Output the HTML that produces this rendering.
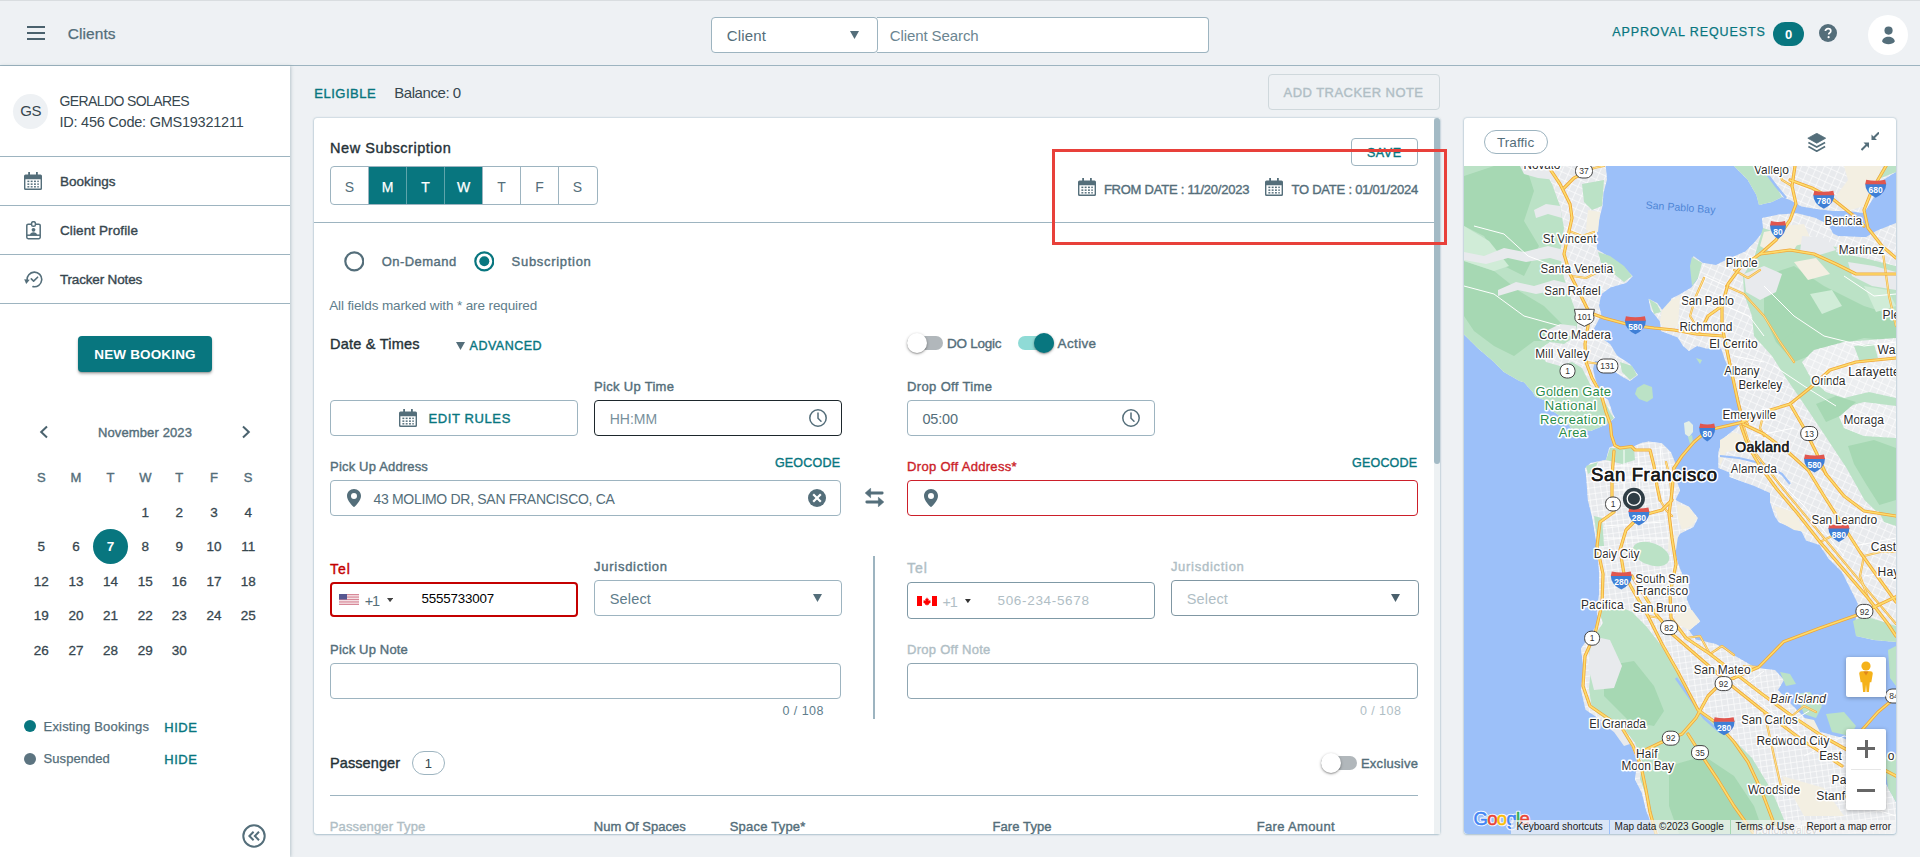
<!DOCTYPE html>
<html><head><meta charset="utf-8"><title>Clients</title>
<style>
html,body{margin:0;padding:0;}
body{width:1920px;height:857px;overflow:hidden;background:#eef1f4;font-family:"Liberation Sans",sans-serif;position:relative;}
.t{position:absolute;white-space:pre;line-height:20px;height:20px;}
.b{position:absolute;display:block;}
</style></head><body>
<div class="b" style="left:0;top:0;width:1920px;height:1px;background:#d9dde0"></div>
<div class="b" style="left:0;top:65px;width:1920px;height:1px;background:#9db4c0"></div>
<div class="b" style="left:27px;top:26px;width:18px;height:2px;background:#4a616d;"></div>
<div class="b" style="left:27px;top:32px;width:18px;height:2px;background:#4a616d;"></div>
<div class="b" style="left:27px;top:38px;width:18px;height:2px;background:#4a616d;"></div>
<div class="t" style="left:67.70px;top:24.00px;font-size:15.5px;font-weight:400;-webkit-text-stroke:0.25px #546e7a;color:#546e7a;letter-spacing:0.08px;">Clients</div>
<div class="b" style="left:711px;top:17px;width:167px;height:36px;border:1px solid #9db4c0;border-radius:4px;background:#fff;box-sizing:border-box;z-index:2;"></div>
<div class="b" style="left:877px;top:17px;width:332px;height:36px;border:1px solid #9db4c0;border-left:none;border-radius:0 4px 4px 0;background:#fff;box-sizing:border-box;"></div>
<div class="t" style="left:726.70px;top:26.00px;font-size:15px;font-weight:400;color:#546e7a;letter-spacing:0.17px;z-index:3;">Client</div>
<svg class="b" style="z-index:3;left:849.5px;top:31.3px;" width="9" height="8" viewBox="0 0 9 8"><path d="M0 0h9l-4.5 8z" fill="#546e7a"/></svg>
<div class="t" style="left:889.70px;top:26.00px;font-size:15px;font-weight:400;color:#6b8591;letter-spacing:-0.09px;">Client Search</div>
<div class="t" style="left:1612.20px;top:22.00px;font-size:12.5px;font-weight:400;-webkit-text-stroke:0.25px #08767f;color:#08767f;letter-spacing:0.9px;">APPROVAL REQUESTS</div>
<div class="b" style="left:1773px;top:22px;width:31px;height:24px;border-radius:12px;background:#08767f;"></div>
<div class="t" style="left:1773.10px;width:31px;text-align:center;top:25.00px;font-size:13px;font-weight:700;color:#fff;">0</div>
<svg class="b" style="left:1819px;top:24px;" width="18" height="18" viewBox="0 0 18 18"><circle cx="9" cy="9" r="9" fill="#546e7a"/><path d="M6.4 7.1c0-1.5 1.2-2.5 2.7-2.5 1.6 0 2.7 1 2.7 2.3 0 1.1-.6 1.6-1.3 2.1-.6.4-.8.7-.8 1.4" fill="none" stroke="#fff" stroke-width="1.7"/><circle cx="9.6" cy="13.2" r="1.1" fill="#fff"/></svg>
<div class="b" style="left:1868px;top:15px;width:40px;height:40px;border-radius:50%;background:#fff;"></div>
<svg class="b" style="left:1881.5px;top:25.5px;" width="13" height="19" viewBox="0 0 13 19"><circle cx="6.55" cy="4.600" r="4.100" fill="#546e7a"/><path d="M0.100 15.600C0.300 12.400 3.200 10.750 6.450 10.750S12.600 12.400 12.800 15.600C11.600 17.500 9 18.300 6.450 18.300S1.300 17.500 0.100 15.600z" fill="#546e7a"/></svg>
<div class="b" style="left:0px;top:66px;width:290px;height:791px;background:#fff;box-shadow:1px 0 3px rgba(120,144,156,.45);"></div>
<div class="b" style="left:13px;top:93.5px;width:35px;height:35px;border-radius:50%;background:#eef1f4;"></div>
<div class="t" style="left:13.10px;width:35px;text-align:center;top:101.00px;font-size:15px;font-weight:400;color:#37474f;letter-spacing:-0.6px;">GS</div>
<div class="t" style="left:59.50px;top:91.00px;font-size:14px;font-weight:400;color:#37474f;letter-spacing:-0.6px;">GERALDO SOLARES</div>
<div class="t" style="left:59.50px;top:112.00px;font-size:14.5px;font-weight:400;color:#37474f;letter-spacing:-0.24px;">ID: 456 Code: GMS19321211</div>
<div class="b" style="left:0px;top:156px;width:290px;height:1px;background:#9db4c0;"></div>
<div class="b" style="left:0px;top:205px;width:290px;height:1px;background:#9db4c0;"></div>
<div class="b" style="left:0px;top:254px;width:290px;height:1px;background:#9db4c0;"></div>
<div class="b" style="left:0px;top:303px;width:290px;height:1px;background:#9db4c0;"></div>
<svg class="b" style="left:24px;top:172px;" width="18" height="18" viewBox="0 0 18 18"><g fill="#546e7a"><rect x="4.2" y="0" width="1.8" height="4"/><rect x="12" y="0" width="1.8" height="4"/>
<path d="M1.5 2.6h15a1.5 1.5 0 0 1 1.5 1.5v12.4a1.5 1.5 0 0 1-1.5 1.5h-15a1.5 1.5 0 0 1-1.5-1.5V4.1a1.5 1.5 0 0 1 1.5-1.5zM1.4 7.2v8.9a.5.5 0 0 0 .5.5h14.2a.5.5 0 0 0 .5-.5V7.2z" fill-rule="evenodd"/>
<rect x="3.4" y="8.6" width="1.9" height="1.5"/><rect x="6.7" y="8.6" width="1.9" height="1.5"/><rect x="10" y="8.6" width="1.9" height="1.5"/><rect x="13.3" y="8.6" width="1.5" height="1.5"/>
<rect x="3.4" y="11.4" width="1.9" height="1.5"/><rect x="6.7" y="11.4" width="1.9" height="1.5"/><rect x="10" y="11.4" width="1.9" height="1.5"/><rect x="13.3" y="11.4" width="1.5" height="1.5"/>
<rect x="3.4" y="14.1" width="1.9" height="1.4"/><rect x="6.7" y="14.1" width="1.9" height="1.4"/><rect x="10" y="14.1" width="1.9" height="1.4"/><rect x="13.3" y="14.1" width="1.5" height="1.4"/></g></svg>
<div class="t" style="left:59.90px;top:172.00px;font-size:13.5px;font-weight:400;-webkit-text-stroke:0.38px #37474f;color:#37474f;letter-spacing:0.02px;">Bookings</div>
<svg class="b" style="left:26px;top:221px;" width="15" height="18.5" viewBox="0 0 15 18.5"><g fill="none" stroke="#546e7a" stroke-width="1.5"><path d="M5 3.2H2.2a1.4 1.4 0 0 0-1.4 1.4v11.7a1.4 1.4 0 0 0 1.4 1.4h10.6a1.4 1.4 0 0 0 1.4-1.4V4.6a1.4 1.4 0 0 0-1.4-1.4H10"/><rect x="5.6" y="0.7" width="3.8" height="4.6" rx="1.6"/><path d="M1 14.2h13"/></g><circle cx="7.5" cy="8.8" r="1.9" fill="#546e7a"/><path d="M3.9 14c.3-1.9 1.7-2.7 3.6-2.7s3.3.8 3.6 2.7z" fill="#546e7a"/></svg>
<div class="t" style="left:59.90px;top:221.00px;font-size:13.5px;font-weight:400;-webkit-text-stroke:0.38px #37474f;color:#37474f;letter-spacing:0.12px;">Client Profile</div>
<svg class="b" style="left:24px;top:270px;" width="18.5" height="18" viewBox="0 0 18.5 18"><g fill="none" stroke="#546e7a" stroke-width="1.6" stroke-linecap="round" stroke-linejoin="round"><path d="M3.2 10.5A7.3 7.3 0 1 1 9 16.6"/><path d="M7.3 8.9l2.3 2.2 4-3.9"/></g><path d="M0.2 9.2l5.6.6-3.6 4.3z" fill="#546e7a"/></svg>
<div class="t" style="left:59.90px;top:270.00px;font-size:13.5px;font-weight:400;-webkit-text-stroke:0.38px #37474f;color:#37474f;letter-spacing:-0.16px;">Tracker Notes</div>
<div class="b" style="left:78px;top:336px;width:134px;height:36px;border-radius:4px;background:#08767f;box-shadow:0 2px 3px rgba(0,0,0,.28),0 1px 1px rgba(0,0,0,.14);"></div>
<div class="t" style="left:78.00px;width:134px;text-align:center;top:345.00px;font-size:13.5px;font-weight:700;color:#fff;letter-spacing:0.15px;">NEW BOOKING</div>
<svg class="b" style="left:39px;top:425px;" width="10" height="14" viewBox="0 0 10 14"><path d="M8 1.5L2.2 7 8 12.5" fill="none" stroke="#4a626e" stroke-width="2"/></svg>
<svg class="b" style="left:241px;top:425px;" width="10" height="14" viewBox="0 0 10 14"><path d="M2 1.5L7.8 7 2 12.5" fill="none" stroke="#4a626e" stroke-width="2"/></svg>
<div class="t" style="left:97.90px;top:423.00px;font-size:13px;font-weight:400;-webkit-text-stroke:0.38px #546e7a;color:#546e7a;letter-spacing:0.13px;">November 2023</div>
<div class="t" style="left:26.30px;width:30px;text-align:center;top:468.00px;font-size:13px;font-weight:400;-webkit-text-stroke:0.38px #546e7a;color:#546e7a;">S</div>
<div class="t" style="left:61.00px;width:30px;text-align:center;top:468.00px;font-size:13px;font-weight:400;-webkit-text-stroke:0.38px #546e7a;color:#546e7a;">M</div>
<div class="t" style="left:95.40px;width:30px;text-align:center;top:468.00px;font-size:13px;font-weight:400;-webkit-text-stroke:0.38px #546e7a;color:#546e7a;">T</div>
<div class="t" style="left:130.30px;width:30px;text-align:center;top:468.00px;font-size:13px;font-weight:400;-webkit-text-stroke:0.38px #546e7a;color:#546e7a;">W</div>
<div class="t" style="left:164.20px;width:30px;text-align:center;top:468.00px;font-size:13px;font-weight:400;-webkit-text-stroke:0.38px #546e7a;color:#546e7a;">T</div>
<div class="t" style="left:199.00px;width:30px;text-align:center;top:468.00px;font-size:13px;font-weight:400;-webkit-text-stroke:0.38px #546e7a;color:#546e7a;">F</div>
<div class="t" style="left:233.20px;width:30px;text-align:center;top:468.00px;font-size:13px;font-weight:400;-webkit-text-stroke:0.38px #546e7a;color:#546e7a;">S</div>
<div class="b" style="left:93px;top:529.3px;width:35px;height:35px;border-radius:50%;background:#08767f;"></div>
<div class="t" style="left:130.30px;width:30px;text-align:center;top:503.00px;font-size:13.5px;font-weight:400;color:#37474f;-webkit-text-stroke:0.3px #37474f;">1</div>
<div class="t" style="left:164.20px;width:30px;text-align:center;top:503.00px;font-size:13.5px;font-weight:400;color:#37474f;-webkit-text-stroke:0.3px #37474f;">2</div>
<div class="t" style="left:199.00px;width:30px;text-align:center;top:503.00px;font-size:13.5px;font-weight:400;color:#37474f;-webkit-text-stroke:0.3px #37474f;">3</div>
<div class="t" style="left:233.20px;width:30px;text-align:center;top:503.00px;font-size:13.5px;font-weight:400;color:#37474f;-webkit-text-stroke:0.3px #37474f;">4</div>
<div class="t" style="left:26.30px;width:30px;text-align:center;top:537.00px;font-size:13.5px;font-weight:400;color:#37474f;-webkit-text-stroke:0.3px #37474f;">5</div>
<div class="t" style="left:61.00px;width:30px;text-align:center;top:537.00px;font-size:13.5px;font-weight:400;color:#37474f;-webkit-text-stroke:0.3px #37474f;">6</div>
<div class="t" style="left:95.40px;width:30px;text-align:center;top:537.00px;font-size:13.5px;font-weight:700;color:#fff;">7</div>
<div class="t" style="left:130.30px;width:30px;text-align:center;top:537.00px;font-size:13.5px;font-weight:400;color:#37474f;-webkit-text-stroke:0.3px #37474f;">8</div>
<div class="t" style="left:164.20px;width:30px;text-align:center;top:537.00px;font-size:13.5px;font-weight:400;color:#37474f;-webkit-text-stroke:0.3px #37474f;">9</div>
<div class="t" style="left:199.00px;width:30px;text-align:center;top:537.00px;font-size:13.5px;font-weight:400;color:#37474f;-webkit-text-stroke:0.3px #37474f;">10</div>
<div class="t" style="left:233.20px;width:30px;text-align:center;top:537.00px;font-size:13.5px;font-weight:400;color:#37474f;-webkit-text-stroke:0.3px #37474f;">11</div>
<div class="t" style="left:26.30px;width:30px;text-align:center;top:572.00px;font-size:13.5px;font-weight:400;color:#37474f;-webkit-text-stroke:0.3px #37474f;">12</div>
<div class="t" style="left:61.00px;width:30px;text-align:center;top:572.00px;font-size:13.5px;font-weight:400;color:#37474f;-webkit-text-stroke:0.3px #37474f;">13</div>
<div class="t" style="left:95.40px;width:30px;text-align:center;top:572.00px;font-size:13.5px;font-weight:400;color:#37474f;-webkit-text-stroke:0.3px #37474f;">14</div>
<div class="t" style="left:130.30px;width:30px;text-align:center;top:572.00px;font-size:13.5px;font-weight:400;color:#37474f;-webkit-text-stroke:0.3px #37474f;">15</div>
<div class="t" style="left:164.20px;width:30px;text-align:center;top:572.00px;font-size:13.5px;font-weight:400;color:#37474f;-webkit-text-stroke:0.3px #37474f;">16</div>
<div class="t" style="left:199.00px;width:30px;text-align:center;top:572.00px;font-size:13.5px;font-weight:400;color:#37474f;-webkit-text-stroke:0.3px #37474f;">17</div>
<div class="t" style="left:233.20px;width:30px;text-align:center;top:572.00px;font-size:13.5px;font-weight:400;color:#37474f;-webkit-text-stroke:0.3px #37474f;">18</div>
<div class="t" style="left:26.30px;width:30px;text-align:center;top:606.00px;font-size:13.5px;font-weight:400;color:#37474f;-webkit-text-stroke:0.3px #37474f;">19</div>
<div class="t" style="left:61.00px;width:30px;text-align:center;top:606.00px;font-size:13.5px;font-weight:400;color:#37474f;-webkit-text-stroke:0.3px #37474f;">20</div>
<div class="t" style="left:95.40px;width:30px;text-align:center;top:606.00px;font-size:13.5px;font-weight:400;color:#37474f;-webkit-text-stroke:0.3px #37474f;">21</div>
<div class="t" style="left:130.30px;width:30px;text-align:center;top:606.00px;font-size:13.5px;font-weight:400;color:#37474f;-webkit-text-stroke:0.3px #37474f;">22</div>
<div class="t" style="left:164.20px;width:30px;text-align:center;top:606.00px;font-size:13.5px;font-weight:400;color:#37474f;-webkit-text-stroke:0.3px #37474f;">23</div>
<div class="t" style="left:199.00px;width:30px;text-align:center;top:606.00px;font-size:13.5px;font-weight:400;color:#37474f;-webkit-text-stroke:0.3px #37474f;">24</div>
<div class="t" style="left:233.20px;width:30px;text-align:center;top:606.00px;font-size:13.5px;font-weight:400;color:#37474f;-webkit-text-stroke:0.3px #37474f;">25</div>
<div class="t" style="left:26.30px;width:30px;text-align:center;top:641.00px;font-size:13.5px;font-weight:400;color:#37474f;-webkit-text-stroke:0.3px #37474f;">26</div>
<div class="t" style="left:61.00px;width:30px;text-align:center;top:641.00px;font-size:13.5px;font-weight:400;color:#37474f;-webkit-text-stroke:0.3px #37474f;">27</div>
<div class="t" style="left:95.40px;width:30px;text-align:center;top:641.00px;font-size:13.5px;font-weight:400;color:#37474f;-webkit-text-stroke:0.3px #37474f;">28</div>
<div class="t" style="left:130.30px;width:30px;text-align:center;top:641.00px;font-size:13.5px;font-weight:400;color:#37474f;-webkit-text-stroke:0.3px #37474f;">29</div>
<div class="t" style="left:164.20px;width:30px;text-align:center;top:641.00px;font-size:13.5px;font-weight:400;color:#37474f;-webkit-text-stroke:0.3px #37474f;">30</div>
<div class="b" style="left:24px;top:720px;width:12px;height:12px;border-radius:50%;background:#08767f;"></div>
<div class="b" style="left:24px;top:752.8px;width:12px;height:12px;border-radius:50%;background:#5c7480;"></div>
<div class="t" style="left:43.60px;top:717.00px;font-size:13px;font-weight:400;color:#546e7a;letter-spacing:0.17px;-webkit-text-stroke:0.25px #546e7a;">Existing Bookings</div>
<div class="t" style="left:43.60px;top:749.00px;font-size:13px;font-weight:400;color:#546e7a;letter-spacing:0.06px;-webkit-text-stroke:0.25px #546e7a;">Suspended</div>
<div class="t" style="left:164.30px;top:718.00px;font-size:13px;font-weight:400;-webkit-text-stroke:0.38px #08767f;color:#08767f;letter-spacing:0.48px;">HIDE</div>
<div class="t" style="left:164.30px;top:750.00px;font-size:13px;font-weight:400;-webkit-text-stroke:0.38px #08767f;color:#08767f;letter-spacing:0.48px;">HIDE</div>
<svg class="b" style="left:242px;top:824px;" width="24" height="24" viewBox="0 0 24 24"><circle cx="12" cy="12" r="10.7" fill="none" stroke="#546e7a" stroke-width="2"/><path d="M11.6 7.8L7.4 12l4.2 4.2M17 7.8L12.8 12l4.2 4.2" fill="none" stroke="#546e7a" stroke-width="2"/></svg>
<div class="t" style="left:314.30px;top:84.00px;font-size:13px;font-weight:400;-webkit-text-stroke:0.38px #08767f;color:#08767f;letter-spacing:0.5px;">ELIGIBLE</div>
<div class="t" style="left:394.20px;top:83.00px;font-size:15px;font-weight:400;color:#37474f;letter-spacing:-0.43px;">Balance: 0</div>
<div class="b" style="left:1268px;top:74px;width:172px;height:36px;border:1px solid #cfd8dc;border-radius:4px;box-sizing:border-box;"></div>
<div class="t" style="left:1283.60px;top:83.00px;font-size:13px;font-weight:400;-webkit-text-stroke:0.38px #b0bec5;color:#b0bec5;letter-spacing:0.45px;">ADD TRACKER NOTE</div>
<div class="b" style="left:314px;top:118px;width:1126px;height:716px;background:#fff;border-radius:3px;box-shadow:0 0 2px rgba(110,150,170,.7),0 1px 2px rgba(110,150,170,.35);"></div>
<div class="b" style="left:1434px;top:118px;width:6px;height:716px;background:#edf1f3;"></div>
<div class="b" style="left:1434px;top:118px;width:6px;height:346px;background:#a3bac5;border-radius:3px;"></div>
<div class="t" style="left:330.10px;top:138.00px;font-size:14.5px;font-weight:400;-webkit-text-stroke:0.38px #263238;color:#263238;letter-spacing:0.52px;">New Subscription</div>
<div class="b" style="left:330px;top:166px;width:268px;height:39px;border:1px solid #9db4c0;border-radius:4px;box-sizing:border-box;background:#fff;"></div>
<div class="b" style="left:368.5px;top:167px;width:114px;height:37px;background:#08767f;"></div>
<div class="b" style="left:368px;top:167px;width:1px;height:37px;background:#9db4c0;"></div>
<div class="b" style="left:406px;top:167px;width:1px;height:37px;background:rgba(255,255,255,.35);"></div>
<div class="b" style="left:444px;top:167px;width:1px;height:37px;background:rgba(255,255,255,.35);"></div>
<div class="b" style="left:482px;top:167px;width:1px;height:37px;background:#9db4c0;"></div>
<div class="b" style="left:520px;top:167px;width:1px;height:37px;background:#9db4c0;"></div>
<div class="b" style="left:558px;top:167px;width:1px;height:37px;background:#9db4c0;"></div>
<div class="t" style="left:331.50px;width:36px;text-align:center;top:177.00px;font-size:14px;font-weight:400;color:#546e7a;">S</div>
<div class="t" style="left:369.50px;width:36px;text-align:center;top:177.00px;font-size:14px;font-weight:400;-webkit-text-stroke:0.25px #fff;color:#fff;">M</div>
<div class="t" style="left:407.50px;width:36px;text-align:center;top:177.00px;font-size:14px;font-weight:400;-webkit-text-stroke:0.25px #fff;color:#fff;">T</div>
<div class="t" style="left:445.50px;width:36px;text-align:center;top:177.00px;font-size:14px;font-weight:400;-webkit-text-stroke:0.25px #fff;color:#fff;">W</div>
<div class="t" style="left:483.50px;width:36px;text-align:center;top:177.00px;font-size:14px;font-weight:400;color:#546e7a;">T</div>
<div class="t" style="left:521.50px;width:36px;text-align:center;top:177.00px;font-size:14px;font-weight:400;color:#546e7a;">F</div>
<div class="t" style="left:559.50px;width:36px;text-align:center;top:177.00px;font-size:14px;font-weight:400;color:#546e7a;">S</div>
<div class="b" style="left:1351px;top:138px;width:67px;height:28px;border:1px solid #9db4c0;border-radius:4px;box-sizing:border-box;"></div>
<div class="t" style="left:1367.00px;top:143.00px;font-size:12.5px;font-weight:400;-webkit-text-stroke:0.38px #08767f;color:#08767f;letter-spacing:0.53px;">SAVE</div>
<svg class="b" style="left:1078px;top:178px;" width="18" height="18" viewBox="0 0 18 18"><g fill="#546e7a"><rect x="4.2" y="0" width="1.8" height="4"/><rect x="12" y="0" width="1.8" height="4"/>
<path d="M1.5 2.6h15a1.5 1.5 0 0 1 1.5 1.5v12.4a1.5 1.5 0 0 1-1.5 1.5h-15a1.5 1.5 0 0 1-1.5-1.5V4.1a1.5 1.5 0 0 1 1.5-1.5zM1.4 7.2v8.9a.5.5 0 0 0 .5.5h14.2a.5.5 0 0 0 .5-.5V7.2z" fill-rule="evenodd"/>
<rect x="3.4" y="8.6" width="1.9" height="1.5"/><rect x="6.7" y="8.6" width="1.9" height="1.5"/><rect x="10" y="8.6" width="1.9" height="1.5"/><rect x="13.3" y="8.6" width="1.5" height="1.5"/>
<rect x="3.4" y="11.4" width="1.9" height="1.5"/><rect x="6.7" y="11.4" width="1.9" height="1.5"/><rect x="10" y="11.4" width="1.9" height="1.5"/><rect x="13.3" y="11.4" width="1.5" height="1.5"/>
<rect x="3.4" y="14.1" width="1.9" height="1.4"/><rect x="6.7" y="14.1" width="1.9" height="1.4"/><rect x="10" y="14.1" width="1.9" height="1.4"/><rect x="13.3" y="14.1" width="1.5" height="1.4"/></g></svg>
<div class="t" style="left:1103.90px;top:180.00px;font-size:13px;font-weight:400;-webkit-text-stroke:0.38px #546e7a;color:#546e7a;letter-spacing:-0.24px;">FROM DATE : 11/20/2023</div>
<svg class="b" style="left:1265px;top:178px;" width="18" height="18" viewBox="0 0 18 18"><g fill="#546e7a"><rect x="4.2" y="0" width="1.8" height="4"/><rect x="12" y="0" width="1.8" height="4"/>
<path d="M1.5 2.6h15a1.5 1.5 0 0 1 1.5 1.5v12.4a1.5 1.5 0 0 1-1.5 1.5h-15a1.5 1.5 0 0 1-1.5-1.5V4.1a1.5 1.5 0 0 1 1.5-1.5zM1.4 7.2v8.9a.5.5 0 0 0 .5.5h14.2a.5.5 0 0 0 .5-.5V7.2z" fill-rule="evenodd"/>
<rect x="3.4" y="8.6" width="1.9" height="1.5"/><rect x="6.7" y="8.6" width="1.9" height="1.5"/><rect x="10" y="8.6" width="1.9" height="1.5"/><rect x="13.3" y="8.6" width="1.5" height="1.5"/>
<rect x="3.4" y="11.4" width="1.9" height="1.5"/><rect x="6.7" y="11.4" width="1.9" height="1.5"/><rect x="10" y="11.4" width="1.9" height="1.5"/><rect x="13.3" y="11.4" width="1.5" height="1.5"/>
<rect x="3.4" y="14.1" width="1.9" height="1.4"/><rect x="6.7" y="14.1" width="1.9" height="1.4"/><rect x="10" y="14.1" width="1.9" height="1.4"/><rect x="13.3" y="14.1" width="1.5" height="1.4"/></g></svg>
<div class="t" style="left:1291.40px;top:180.00px;font-size:13px;font-weight:400;-webkit-text-stroke:0.38px #546e7a;color:#546e7a;letter-spacing:-0.22px;">TO DATE : 01/01/2024</div>
<div class="b" style="left:314px;top:222px;width:1120px;height:1px;background:#9db4c0;"></div>
<div class="b" style="left:1052px;top:149px;width:395px;height:96px;border:3px solid #e8403a;box-sizing:border-box;z-index:20;"></div>
<svg class="b" style="left:343.5px;top:251px;" width="20.6" height="20.6" viewBox="0 0 20.6 20.6"><circle cx="10.3" cy="10.3" r="9" fill="#fff" stroke="#546e7a" stroke-width="2.200"/></svg>
<svg class="b" style="left:473.5px;top:251px;" width="20.6" height="20.6" viewBox="0 0 20.6 20.6"><circle cx="10.3" cy="10.3" r="9" fill="#fff" stroke="#08767f" stroke-width="2.200"/><circle cx="10.3" cy="10.3" r="5" fill="#08767f"/></svg>
<div class="t" style="left:381.80px;top:252.00px;font-size:13px;font-weight:400;-webkit-text-stroke:0.38px #546e7a;color:#546e7a;letter-spacing:0.44px;">On-Demand</div>
<div class="t" style="left:511.60px;top:252.00px;font-size:13px;font-weight:400;-webkit-text-stroke:0.38px #546e7a;color:#546e7a;letter-spacing:0.7px;">Subscription</div>
<div class="t" style="left:329.20px;top:296.00px;font-size:13.5px;font-weight:400;color:#607d8b;letter-spacing:-0.12px;">All fields marked with * are required</div>
<div class="t" style="left:330.10px;top:334.00px;font-size:14.5px;font-weight:400;-webkit-text-stroke:0.38px #263238;color:#263238;letter-spacing:0.22px;">Date &amp; Times</div>
<svg class="b" style="left:456.3px;top:342px;" width="9" height="8" viewBox="0 0 9 8"><path d="M0 0h9l-4.5 8z" fill="#546e7a"/></svg>
<div class="t" style="left:469.60px;top:336.00px;font-size:12.5px;font-weight:400;-webkit-text-stroke:0.38px #08767f;color:#08767f;letter-spacing:0.5px;">ADVANCED</div>
<div class="b" style="left:906.7px;top:336px;width:36px;height:14px;border-radius:7px;background:#b1b7bb;"></div>
<div class="b" style="left:906.7px;top:333px;width:20px;height:20px;border-radius:50%;background:#fff;box-shadow:0 1px 3px rgba(0,0,0,.35),0 1px 1px rgba(0,0,0,.15);"></div>
<div class="t" style="left:947.10px;top:334.00px;font-size:13.5px;font-weight:400;-webkit-text-stroke:0.38px #546e7a;color:#546e7a;letter-spacing:-0.25px;">DO Logic</div>
<div class="b" style="left:1017.7px;top:336px;width:36px;height:14px;border-radius:7px;background:#8fdbd6;"></div>
<div class="b" style="left:1033.7px;top:333px;width:20px;height:20px;border-radius:50%;background:#08767f;box-shadow:0 1px 3px rgba(0,0,0,.35),0 1px 1px rgba(0,0,0,.15);"></div>
<div class="t" style="left:1057.60px;top:334.00px;font-size:13.5px;font-weight:400;-webkit-text-stroke:0.38px #546e7a;color:#546e7a;letter-spacing:0.35px;">Active</div>
<div class="b" style="left:330px;top:400px;width:248px;height:36px;border:1px solid #9db4c0;border-radius:4px;box-sizing:border-box;"></div>
<svg class="b" style="left:399px;top:409px;" width="18" height="18" viewBox="0 0 18 18"><g fill="#546e7a"><rect x="4.2" y="0" width="1.8" height="4"/><rect x="12" y="0" width="1.8" height="4"/>
<path d="M1.5 2.6h15a1.5 1.5 0 0 1 1.5 1.5v12.4a1.5 1.5 0 0 1-1.5 1.5h-15a1.5 1.5 0 0 1-1.5-1.5V4.1a1.5 1.5 0 0 1 1.5-1.5zM1.4 7.2v8.9a.5.5 0 0 0 .5.5h14.2a.5.5 0 0 0 .5-.5V7.2z" fill-rule="evenodd"/>
<rect x="3.4" y="8.6" width="1.9" height="1.5"/><rect x="6.7" y="8.6" width="1.9" height="1.5"/><rect x="10" y="8.6" width="1.9" height="1.5"/><rect x="13.3" y="8.6" width="1.5" height="1.5"/>
<rect x="3.4" y="11.4" width="1.9" height="1.5"/><rect x="6.7" y="11.4" width="1.9" height="1.5"/><rect x="10" y="11.4" width="1.9" height="1.5"/><rect x="13.3" y="11.4" width="1.5" height="1.5"/>
<rect x="3.4" y="14.1" width="1.9" height="1.4"/><rect x="6.7" y="14.1" width="1.9" height="1.4"/><rect x="10" y="14.1" width="1.9" height="1.4"/><rect x="13.3" y="14.1" width="1.5" height="1.4"/></g></svg>
<div class="t" style="left:428.40px;top:409.00px;font-size:13px;font-weight:400;-webkit-text-stroke:0.38px #08767f;color:#08767f;letter-spacing:0.62px;">EDIT RULES</div>
<div class="t" style="left:594.10px;top:377.00px;font-size:13px;font-weight:400;-webkit-text-stroke:0.38px #546e7a;color:#546e7a;letter-spacing:0.3px;">Pick Up Time</div>
<div class="b" style="left:594px;top:400px;width:248px;height:36px;border:1.5px solid #1d272c;border-radius:4px;box-sizing:border-box;"></div>
<div class="t" style="left:609.70px;top:409.00px;font-size:14px;font-weight:400;color:#78909c;">HH:MM</div>
<svg class="b" style="left:807.7px;top:408px;" width="20" height="20" viewBox="0 0 20 20"><circle cx="10" cy="10" r="8.2" fill="none" stroke="#546e7a" stroke-width="1.5"/><path d="M10 5v5.2l3 3" fill="none" stroke="#546e7a" stroke-width="1.5" stroke-linecap="round"/></svg>
<div class="t" style="left:907.10px;top:377.00px;font-size:13px;font-weight:400;-webkit-text-stroke:0.38px #546e7a;color:#546e7a;letter-spacing:0.35px;">Drop Off Time</div>
<div class="b" style="left:907px;top:400px;width:248px;height:36px;border:1px solid #9db4c0;border-radius:4px;box-sizing:border-box;"></div>
<div class="t" style="left:922.50px;top:409.00px;font-size:14.5px;font-weight:400;color:#546e7a;letter-spacing:-0.2px;">05:00</div>
<svg class="b" style="left:1120.6px;top:408px;" width="20" height="20" viewBox="0 0 20 20"><circle cx="10" cy="10" r="8.2" fill="none" stroke="#546e7a" stroke-width="1.5"/><path d="M10 5v5.2l3 3" fill="none" stroke="#546e7a" stroke-width="1.5" stroke-linecap="round"/></svg>
<div class="t" style="left:330.10px;top:457.00px;font-size:13px;font-weight:400;-webkit-text-stroke:0.38px #546e7a;color:#546e7a;letter-spacing:0.17px;">Pick Up Address</div>
<div class="t" style="left:774.90px;top:453.00px;font-size:12.5px;font-weight:400;-webkit-text-stroke:0.38px #08767f;color:#08767f;letter-spacing:0.2px;">GEOCODE</div>
<div class="b" style="left:330px;top:480px;width:511px;height:36px;border:1px solid #9db4c0;border-radius:4px;box-sizing:border-box;"></div>
<svg class="b" style="left:346.7px;top:489px;" width="14" height="18" viewBox="0 0 14 18"><path d="M7 0C3.1 0 0 3.1 0 7c0 4.6 5.6 10 6.5 10.8a.7.7 0 0 0 1 0C8.4 17 14 11.6 14 7c0-3.9-3.1-7-7-7zm0 9.9A3 3 0 1 1 7 3.9a3 3 0 0 1 0 6z" fill="#546e7a"/></svg>
<div class="t" style="left:373.40px;top:489.00px;font-size:14px;font-weight:400;color:#546e7a;letter-spacing:-0.3px;">43 MOLIMO DR, SAN FRANCISCO, CA</div>
<svg class="b" style="left:808px;top:489px;" width="18" height="18" viewBox="0 0 18 18"><circle cx="9" cy="9" r="9" fill="#546e7a"/><path d="M5.2 5.2l7.600 7.600M12.800 5.200l-7.600 7.600" stroke="#fff" stroke-width="2.200" fill="none"/></svg>
<svg class="b" style="left:864.5px;top:487.5px;" width="19" height="19" viewBox="0 0 19 19"><g fill="none" stroke="#546e7a" stroke-width="2.8" stroke-linecap="round"><path d="M5 5h12.2M1.800 14h11.7"/></g><path d="M0.200 5l5.400-4.700v9.400zM18.800 14l-5.400-4.700v9.400z" fill="#546e7a" stroke="#546e7a" stroke-width="0.600" stroke-linejoin="round"/></svg>
<div class="t" style="left:907.10px;top:457.00px;font-size:13px;font-weight:400;-webkit-text-stroke:0.38px #cc1f2a;color:#cc1f2a;letter-spacing:0.31px;">Drop Off Address*</div>
<div class="t" style="left:1352.10px;top:453.00px;font-size:12.5px;font-weight:400;-webkit-text-stroke:0.38px #08767f;color:#08767f;letter-spacing:0.17px;">GEOCODE</div>
<div class="b" style="left:907px;top:480px;width:511px;height:36px;border:1.3px solid #cc1f2a;border-radius:4px;box-sizing:border-box;"></div>
<svg class="b" style="left:923.8px;top:489px;" width="14" height="18" viewBox="0 0 14 18"><path d="M7 0C3.1 0 0 3.1 0 7c0 4.6 5.6 10 6.5 10.8a.7.7 0 0 0 1 0C8.4 17 14 11.6 14 7c0-3.9-3.1-7-7-7zm0 9.9A3 3 0 1 1 7 3.9a3 3 0 0 1 0 6z" fill="#546e7a"/></svg>
<div class="t" style="left:330.10px;top:559.00px;font-size:14px;font-weight:400;-webkit-text-stroke:0.38px #c40000;color:#c40000;letter-spacing:0.9px;">Tel</div>
<div class="b" style="left:330px;top:582px;width:248px;height:35px;border:2px solid #c40000;border-radius:4px;box-sizing:border-box;"></div>
<svg class="b" style="left:339px;top:593.7px;" width="20" height="11" viewBox="0 0 20 11"><rect width="20" height="11" fill="#fff"/><rect y="0.00" width="20" height="0.85" fill="#cf6d80" opacity=".95"/><rect y="1.69" width="20" height="0.85" fill="#cf6d80" opacity=".95"/><rect y="3.38" width="20" height="0.85" fill="#cf6d80" opacity=".95"/><rect y="5.08" width="20" height="0.85" fill="#cf6d80" opacity=".95"/><rect y="6.77" width="20" height="0.85" fill="#cf6d80" opacity=".95"/><rect y="8.46" width="20" height="0.85" fill="#cf6d80" opacity=".95"/><rect y="10.15" width="20" height="0.85" fill="#cf6d80" opacity=".95"/><rect width="8" height="5.5" fill="#565690"/></svg>
<div class="t" style="left:364.70px;top:591.00px;font-size:14.5px;font-weight:400;color:#546e7a;letter-spacing:-1.2px;">+1</div>
<svg class="b" style="left:387px;top:597.6px;" width="6.2" height="4.2" viewBox="0 0 6.2 4.2"><path d="M0 0h6.2l-3.1 4.2z" fill="#444"/></svg>
<div class="t" style="left:421.40px;top:589.00px;font-size:13.33px;font-weight:400;color:#000;letter-spacing:-0.15px;">5555733007</div>
<div class="t" style="left:594.10px;top:557.00px;font-size:13px;font-weight:400;-webkit-text-stroke:0.38px #546e7a;color:#546e7a;letter-spacing:0.72px;">Jurisdiction</div>
<div class="b" style="left:594px;top:580px;width:248px;height:36px;border:1px solid #9db4c0;border-radius:4px;box-sizing:border-box;"></div>
<div class="t" style="left:609.70px;top:589.00px;font-size:14.5px;font-weight:400;color:#607d8b;letter-spacing:0.18px;">Select</div>
<svg class="b" style="left:813.3px;top:594px;" width="9" height="8" viewBox="0 0 9 8"><path d="M0 0h9l-4.5 8z" fill="#546e7a"/></svg>
<div class="b" style="left:873px;top:556px;width:2px;height:163px;background:#9db4c0;"></div>
<div class="t" style="left:907.10px;top:558.00px;font-size:14px;font-weight:400;-webkit-text-stroke:0.38px #b0bec5;color:#b0bec5;letter-spacing:0.9px;">Tel</div>
<div class="b" style="left:907px;top:582px;width:248px;height:37px;border:1px solid #7f99a6;border-radius:4px;box-sizing:border-box;"></div>
<svg class="b" style="left:917px;top:595.8px;" width="20" height="10.4" viewBox="0 0 20 10.4"><rect width="20" height="10.4" fill="#fff"/><rect width="5" height="10.4" fill="#f00"/><rect x="15" width="5" height="10.4" fill="#f00"/><path d="M10 1.3l.9 1.7.9-.3-.4 2.3 1-.9.2.6 1.2-.2-.5 1.6.5.3-2.2 1.7.2.8-1.6-.2v1.5h-.4V8.7l-1.6.2.2-.8L6.2 6.400l.5-.3-.5-1.600 1.200.2.200-.6 1 .9-.4-2.3.9.3z" fill="#f00"/></svg>
<div class="t" style="left:942.50px;top:592.00px;font-size:14.5px;font-weight:400;color:#b0bec5;letter-spacing:-1.2px;">+1</div>
<svg class="b" style="left:965px;top:599px;" width="5.8" height="4.2" viewBox="0 0 5.8 4.2"><path d="M0 0h5.8l-2.9 4.2z" fill="#333"/></svg>
<div class="t" style="left:997.50px;top:591.00px;font-size:13.5px;font-weight:400;color:#b0bec5;letter-spacing:0.67px;">506-234-5678</div>
<div class="t" style="left:1170.90px;top:557.00px;font-size:13px;font-weight:400;-webkit-text-stroke:0.38px #b0bec5;color:#b0bec5;letter-spacing:0.72px;">Jurisdiction</div>
<div class="b" style="left:1171px;top:580px;width:248px;height:36px;border:1px solid #8097a3;border-radius:4px;box-sizing:border-box;"></div>
<div class="t" style="left:1186.70px;top:589.00px;font-size:14.5px;font-weight:400;color:#b0bec5;letter-spacing:0.18px;">Select</div>
<svg class="b" style="left:1390.5px;top:594px;" width="9" height="8" viewBox="0 0 9 8"><path d="M0 0h9l-4.5 8z" fill="#4a606c"/></svg>
<div class="t" style="left:330.10px;top:640.00px;font-size:13px;font-weight:400;-webkit-text-stroke:0.38px #546e7a;color:#546e7a;letter-spacing:0.17px;">Pick Up Note</div>
<div class="b" style="left:330px;top:663px;width:511px;height:36px;border:1px solid #9db4c0;border-radius:4px;box-sizing:border-box;"></div>
<div class="t" style="left:782.50px;top:701.00px;font-size:12.5px;font-weight:400;color:#607d8b;letter-spacing:0.46px;">0 / 108</div>
<div class="t" style="left:907.10px;top:640.00px;font-size:13px;font-weight:400;-webkit-text-stroke:0.38px #b0bec5;color:#b0bec5;letter-spacing:0.27px;">Drop Off Note</div>
<div class="b" style="left:907px;top:663px;width:511px;height:36px;border:1px solid #8fa6b2;border-radius:4px;box-sizing:border-box;"></div>
<div class="t" style="left:1359.90px;top:701.00px;font-size:12.5px;font-weight:400;color:#b0bec5;letter-spacing:0.46px;">0 / 108</div>
<div class="t" style="left:330.10px;top:753.00px;font-size:14.5px;font-weight:400;-webkit-text-stroke:0.38px #263238;color:#263238;letter-spacing:0.07px;">Passenger</div>
<div class="b" style="left:412px;top:751px;width:33px;height:24px;border:1px solid #9db4c0;border-radius:12px;box-sizing:border-box;"></div>
<div class="t" style="left:411.90px;width:33px;text-align:center;top:754.00px;font-size:13px;font-weight:400;color:#37474f;">1</div>
<div class="b" style="left:1321px;top:756px;width:36px;height:14px;border-radius:7px;background:#b1b7bb;"></div>
<div class="b" style="left:1321px;top:753px;width:20px;height:20px;border-radius:50%;background:#fff;box-shadow:0 1px 3px rgba(0,0,0,.35),0 1px 1px rgba(0,0,0,.15);"></div>
<div class="t" style="left:1360.90px;top:754.00px;font-size:13px;font-weight:400;-webkit-text-stroke:0.38px #546e7a;color:#546e7a;letter-spacing:0.28px;">Exclusive</div>
<div class="b" style="left:330px;top:795px;width:1088px;height:1px;background:#9db4c0;"></div>
<div class="b" style="left:314px;top:800px;width:1120px;height:34px;overflow:hidden;">
<div class="t" style="left:15.70px;top:17.00px;font-size:13px;font-weight:400;-webkit-text-stroke:0.38px #b0bec5;color:#b0bec5;letter-spacing:0.15px">Passenger Type</div>
<div class="t" style="left:279.80px;top:17.00px;font-size:13px;font-weight:400;-webkit-text-stroke:0.38px #546e7a;color:#546e7a;letter-spacing:0.01px">Num Of Spaces</div>
<div class="t" style="left:415.70px;top:17.00px;font-size:13px;font-weight:400;-webkit-text-stroke:0.38px #546e7a;color:#546e7a;letter-spacing:0.22px">Space Type*</div>
<div class="t" style="left:678.50px;top:17.00px;font-size:13px;font-weight:400;-webkit-text-stroke:0.38px #546e7a;color:#546e7a;letter-spacing:0.1px">Fare Type</div>
<div class="t" style="left:942.70px;top:17.00px;font-size:13px;font-weight:400;-webkit-text-stroke:0.38px #546e7a;color:#546e7a;letter-spacing:0.35px">Fare Amount</div>
</div>
<div class="b" style="left:1464px;top:118px;width:432px;height:716px;background:#fff;border-radius:3px;box-shadow:0 0 2px rgba(110,150,170,.7),0 1px 2px rgba(110,150,170,.35);"></div>
<div class="b" style="left:1484px;top:130px;width:64px;height:24px;border:1px solid #9db4c0;border-radius:12px;box-sizing:border-box;"></div>
<div class="t" style="left:1496.90px;top:133.00px;font-size:13.5px;font-weight:400;color:#546e7a;letter-spacing:0.09px;">Traffic</div>
<svg class="b" style="left:1806.5px;top:132.5px;" width="19.5" height="19" viewBox="0 0 19.5 19"><path d="M9.75 0.300L18.700 5.200 9.750 10.200 0.800 5.200z" stroke="#546e7a" stroke-width="0.800" stroke-linejoin="round" fill="#546e7a"/><path d="M1.4 9.4l8.35 4.6 8.35-4.6M1.4 13.6l8.35 4.600 8.350-4.600" fill="none" stroke="#546e7a" stroke-width="1.7"/></svg>
<svg class="b" style="left:1860.5px;top:132px;" width="18.5" height="18.5" viewBox="0 0 18.5 18.5"><g stroke="#546e7a" stroke-width="2" fill="none"><path d="M18 0.500l-6 6M0.500 18l6-6"/></g><path d="M10.500 2.500v5.500h5.500zM8 16v-5.500H2.500z" fill="#546e7a"/></svg>
<div class="b" style="left:1464px;top:166px;width:432px;height:668px;overflow:hidden;border-radius:0 0 4px 4px;">
<svg width="432" height="668" viewBox="0 0 432 668" style="display:block;font-family:'Liberation Sans',sans-serif">
<rect width="432" height="668" fill="#9cc0f9"/>
<defs><pattern id="grid" width="7" height="7" patternUnits="userSpaceOnUse" patternTransform="rotate(24)"><path d="M0 0.500H7M0.500 0V7" stroke="#fff" stroke-width="0.8" fill="none" opacity=".75"/></pattern><pattern id="grid2" width="6" height="6" patternUnits="userSpaceOnUse" patternTransform="rotate(-8)"><path d="M0 0.500H6M0.500 0V6" stroke="#fff" stroke-width="0.8" fill="none" opacity=".75"/></pattern></defs>
<polygon points="0.0,0.0 141.8,0.0 143.0,13.5 139.5,27.0 138.4,40.5 135.0,54.0 132.8,67.5 132.8,83.3 144.0,90.0 157.5,99.0 168.8,110.3 162.0,117.0 146.3,121.5 137.3,128.3 135.0,139.5 137.3,148.5 132.8,157.5 128.0,166.0 136.0,171.0 146.3,178.3 153.0,189.5 166.5,198.5 174.0,209.0 166.0,215.0 157.0,210.0 148.5,204.0 139.0,196.0 131.0,195.0 129.0,203.0 131.0,212.0 137.6,229.5 144.2,233.9 146.4,240.6 148.6,247.2 150.9,251.7 145.3,256.5 135.3,261.6 126.5,265.0 117.6,262.8 107.6,262.8 104.3,258.3 96.6,250.6 85.5,242.8 79.9,233.9 71.1,230.6 68.9,226.2 60.0,216.2 55.4,215.0 39.9,206.1 28.8,195.0 13.3,181.7 0.0,168.4" fill="#e8eaed"/>
<polygon points="0.0,0.0 141.8,0.0 143.0,13.5 139.5,27.0 138.4,40.5 135.0,54.0 132.8,67.5 132.8,83.3 144.0,90.0 157.5,99.0 168.8,110.3 162.0,117.0 146.3,121.5 137.3,128.3 135.0,139.5 137.3,148.5 132.8,157.5 128.0,166.0 136.0,171.0 146.3,178.3 153.0,189.5 166.5,198.5 174.0,209.0 166.0,215.0 157.0,210.0 148.5,204.0 139.0,196.0 131.0,195.0 129.0,203.0 131.0,212.0 137.6,229.5 144.2,233.9 146.4,240.6 148.6,247.2 150.9,251.7 145.3,256.5 135.3,261.6 126.5,265.0 117.6,262.8 107.6,262.8 104.3,258.3 96.6,250.6 85.5,242.8 79.9,233.9 71.1,230.6 68.9,226.2 60.0,216.2 55.4,215.0 39.9,206.1 28.8,195.0 13.3,181.7 0.0,168.4" fill="url(#grid)"/>
<polygon points="270.0,0.0 283.5,13.5 292.5,29.3 295.0,39.0 308.0,36.0 318.0,31.0 326.0,34.0 337.5,40.5 351.0,42.8 369.0,45.0 383.0,45.0 400.0,47.0 410.0,31.0 419.0,14.0 432.0,6.0 432.0,0.0" fill="#e8eaed"/>
<polygon points="270.0,0.0 283.5,13.5 292.5,29.3 295.0,39.0 308.0,36.0 318.0,31.0 326.0,34.0 337.5,40.5 351.0,42.8 369.0,45.0 383.0,45.0 400.0,47.0 410.0,31.0 419.0,14.0 432.0,6.0 432.0,0.0" fill="url(#grid)"/>
<polygon points="432.0,57.0 412.0,65.0 400.5,72.0 382.5,74.0 369.0,67.5 364.5,58.5 351.0,51.8 333.0,47.3 315.0,48.4 298.0,52.0 299.3,65.3 290.3,76.5 281.3,85.5 265.5,92.3 252.0,99.0 238.5,96.8 229.5,90.0 227.3,99.0 234.0,112.5 227.3,121.5 216.0,128.3 207.0,132.8 207.0,141.8 198.0,144.0 193.5,137.3 184.5,132.8 186.8,144.0 195.8,155.3 197.0,165.0 205.0,168.0 213.8,171.5 219.0,180.0 225.0,185.0 233.0,180.0 243.0,182.8 256.5,180.5 261.0,194.0 267.8,209.8 273.4,225.5 276.8,241.3 279.0,256.0 270.0,263.8 258.8,272.8 254.3,286.3 254.3,302.0 265.5,306.5 265.5,311.0 290.3,320.0 306.0,327.0 306.0,336.0 310.5,349.8 315.0,356.5 337.5,365.5 342.0,374.5 355.5,379.0 364.5,392.5 378.0,406.0 387.0,424.0 393.8,437.5 391.5,455.5 392.0,470.0 410.0,474.0 432.0,476.0" fill="#e8eaed"/>
<polygon points="432.0,57.0 412.0,65.0 400.5,72.0 382.5,74.0 369.0,67.5 364.5,58.5 351.0,51.8 333.0,47.3 315.0,48.4 298.0,52.0 299.3,65.3 290.3,76.5 281.3,85.5 265.5,92.3 252.0,99.0 238.5,96.8 229.5,90.0 227.3,99.0 234.0,112.5 227.3,121.5 216.0,128.3 207.0,132.8 207.0,141.8 198.0,144.0 193.5,137.3 184.5,132.8 186.8,144.0 195.8,155.3 197.0,165.0 205.0,168.0 213.8,171.5 219.0,180.0 225.0,185.0 233.0,180.0 243.0,182.8 256.5,180.5 261.0,194.0 267.8,209.8 273.4,225.5 276.8,241.3 279.0,256.0 270.0,263.8 258.8,272.8 254.3,286.3 254.3,302.0 265.5,306.5 265.5,311.0 290.3,320.0 306.0,327.0 306.0,336.0 310.5,349.8 315.0,356.5 337.5,365.5 342.0,374.5 355.5,379.0 364.5,392.5 378.0,406.0 387.0,424.0 393.8,437.5 391.5,455.5 392.0,470.0 410.0,474.0 432.0,476.0" fill="url(#grid)"/>
<polygon points="150.9,279.4 158.0,281.5 168.8,281.0 177.0,277.0 184.5,275.5 198.0,277.3 207.0,286.3 211.5,297.5 211.5,311.0 216.0,324.5 211.5,334.0 225.0,340.8 234.0,352.0 229.5,361.0 216.0,367.8 209.3,379.0 213.8,397.0 218.3,408.3 225.0,419.5 222.8,433.0 227.3,444.3 236.3,455.5 225.0,464.5 231.8,473.5 252.0,478.0 270.0,489.3 290.3,501.0 301.5,503.0 311.0,504.0 320.0,514.0 314.0,524.0 327.0,538.0 340.0,551.0 347.0,563.0 360.0,567.0 379.0,572.0 396.0,580.0 410.0,598.0 421.0,616.0 432.0,636.0 432.0,668.0 191.3,668.0 182.3,645.0 177.8,627.0 171.0,613.5 173.3,595.5 166.5,577.5 157.5,564.0 135.0,552.8 121.5,543.8 117.0,523.5 119.3,501.0 117.0,482.5 126.0,469.0 135.0,455.5 132.8,446.5 135.0,428.5 135.0,406.0 132.8,379.0 128.3,352.0 123.8,334.0 122.0,309.0 120.9,302.6 126.5,297.1 142.0,293.8 145.3,281.6" fill="#e8eaed"/>
<polygon points="150.9,279.4 158.0,281.5 168.8,281.0 177.0,277.0 184.5,275.5 198.0,277.3 207.0,286.3 211.5,297.5 211.5,311.0 216.0,324.5 211.5,334.0 225.0,340.8 234.0,352.0 229.5,361.0 216.0,367.8 209.3,379.0 213.8,397.0 218.3,408.3 225.0,419.5 222.8,433.0 227.3,444.3 236.3,455.5 225.0,464.5 231.8,473.5 252.0,478.0 270.0,489.3 290.3,501.0 301.5,503.0 311.0,504.0 320.0,514.0 314.0,524.0 327.0,538.0 340.0,551.0 347.0,563.0 360.0,567.0 379.0,572.0 396.0,580.0 410.0,598.0 421.0,616.0 432.0,636.0 432.0,668.0 191.3,668.0 182.3,645.0 177.8,627.0 171.0,613.5 173.3,595.5 166.5,577.5 157.5,564.0 135.0,552.8 121.5,543.8 117.0,523.5 119.3,501.0 117.0,482.5 126.0,469.0 135.0,455.5 132.8,446.5 135.0,428.5 135.0,406.0 132.8,379.0 128.3,352.0 123.8,334.0 122.0,309.0 120.9,302.6 126.5,297.1 142.0,293.8 145.3,281.6" fill="url(#grid2)"/>
<polygon points="0.0,0.0 78.0,0.0 88.0,18.0 96.0,40.0 100.0,62.0 96.0,88.0 100.0,112.0 108.0,135.0 114.0,152.0 112.0,170.0 100.0,178.0 86.0,176.0 74.0,184.0 82.0,196.0 96.0,200.0 108.0,196.0 118.0,202.0 124.0,214.0 130.0,226.0 138.0,232.0 143.0,240.0 147.0,248.0 150.0,252.0 145.3,256.5 135.3,261.6 126.5,265.0 117.6,262.8 107.6,262.8 104.3,258.3 96.6,250.6 85.5,242.8 79.9,233.9 71.1,230.6 68.9,226.2 60.0,216.2 55.4,215.0 39.9,206.1 28.8,195.0 13.3,181.7 0.0,168.4" fill="#bbe2c6"/>
<polygon points="0.0,10.0 30.0,0.0 62.0,0.0 70.0,25.0 60.0,55.0 75.0,80.0 60.0,110.0 40.0,100.0 20.0,70.0 0.0,60.0" fill="#a6d8b3"/>
<polygon points="0.0,95.0 30.0,105.0 55.0,125.0 80.0,140.0 100.0,160.0 95.0,175.0 70.0,175.0 50.0,190.0 30.0,180.0 10.0,165.0 0.0,150.0" fill="#a6d8b3"/>
<polygon points="0.0,60.0 25.0,75.0 45.0,100.0 30.0,105.0 0.0,95.0" fill="#d0ecd7"/>
<polygon points="56.0,0.0 84.0,0.0 92.0,14.0 74.0,12.0 60.0,8.0" fill="#e8eaed"/>
<polygon points="100.0,84.0 84.0,80.0 60.0,86.0 40.0,82.0 20.0,90.0 0.0,86.0 0.0,94.0 22.0,98.0 44.0,92.0 62.0,96.0 86.0,92.0 100.0,96.0" fill="#e8eaed"/>
<polygon points="106.0,118.0 90.0,114.0 70.0,120.0 52.0,116.0 34.0,124.0 34.0,130.0 54.0,124.0 72.0,128.0 92.0,124.0 108.0,130.0" fill="#e8eaed"/>
<polygon points="96.0,40.0 82.0,38.0 70.0,44.0 72.0,52.0 84.0,48.0 98.0,52.0" fill="#e8eaed"/>
<polygon points="112.0,160.0 96.0,158.0 80.0,166.0 84.0,174.0 98.0,168.0 114.0,172.0" fill="#e8eaed"/>
<polygon points="118.0,18.0 140.0,14.0 138.0,40.0 128.0,44.0 120.0,36.0" fill="#bbe2c6"/>
<polygon points="124.0,44.0 136.0,46.0 134.0,66.0 122.0,64.0" fill="#f3efe2"/>
<polygon points="134.0,86.0 146.0,90.0 160.0,100.0 168.0,110.0 160.0,116.0 150.0,108.0 138.0,100.0" fill="#bbe2c6"/>
<polygon points="156.0,196.0 168.0,200.0 173.0,209.0 166.0,214.0 158.0,206.0" fill="#bbe2c6"/>
<polygon points="270.0,0.0 300.0,0.0 312.0,20.0 318.0,31.0 308.0,36.0 295.0,39.0 292.5,29.3 283.5,13.5" fill="#bbe2c6"/>
<polygon points="380.0,0.0 418.0,0.0 410.0,20.0 400.0,40.0 383.0,45.0 372.0,30.0 384.0,14.0" fill="#f3efe2"/>
<polygon points="412.0,14.0 432.0,6.0 432.0,0.0 420.0,0.0" fill="#bbe2c6"/>
<polygon points="299.0,62.0 330.0,72.0 365.0,80.0 400.0,84.0 432.0,92.0 432.0,345.0 412.0,345.0 400.5,334.0 382.5,302.0 360.0,268.0 337.5,234.5 322.0,212.0 308.0,190.0 290.0,170.0 288.0,150.0 280.0,128.0 279.0,110.0 290.0,92.0" fill="#bbe2c6"/>
<polygon points="300.0,110.0 330.0,100.0 360.0,120.0 400.0,140.0 432.0,150.0 432.0,175.0 400.0,172.0 370.0,180.0 345.0,190.0 330.0,196.0 312.0,176.0 300.0,150.0" fill="#a6d8b3"/>
<polygon points="338.0,196.0 350.0,184.0 380.0,176.0 432.0,172.0 432.0,232.0 405.0,226.0 380.0,232.0 362.0,226.0 348.0,214.0" fill="#eceef0"/>
<polygon points="338.0,196.0 350.0,184.0 380.0,176.0 432.0,172.0 432.0,232.0 405.0,226.0 380.0,232.0 362.0,226.0 348.0,214.0" fill="url(#grid)"/>
<polygon points="390.0,180.0 410.0,178.0 414.0,192.0 396.0,196.0" fill="#bbe2c6"/>
<polygon points="372.0,244.0 400.0,236.0 432.0,240.0 432.0,272.0 400.0,270.0 380.0,262.0" fill="#eceef0"/>
<polygon points="372.0,244.0 400.0,236.0 432.0,240.0 432.0,272.0 400.0,270.0 380.0,262.0" fill="url(#grid)"/>
<polygon points="352.0,238.0 372.0,230.0 392.0,236.0 376.0,250.0 362.0,256.0" fill="#a6d8b3"/>
<polygon points="384.0,280.0 410.0,274.0 432.0,282.0 432.0,340.0 416.0,340.0 402.0,318.0 390.0,298.0" fill="#a6d8b3"/>
<polygon points="375.0,70.0 420.0,72.0 432.0,80.0 432.0,100.0 400.0,92.0 372.0,86.0" fill="#e8eaed"/>
<polygon points="375.0,70.0 420.0,72.0 432.0,80.0 432.0,100.0 400.0,92.0 372.0,86.0" fill="url(#grid)"/>
<polygon points="318.0,60.0 340.0,58.0 348.0,76.0 330.0,80.0" fill="#f3efe2"/>
<polygon points="330.0,96.0 352.0,92.0 366.0,108.0 344.0,114.0" fill="#f3efe2"/>
<polygon points="228.0,91.0 238.0,97.0 234.0,112.0 228.0,120.0 226.0,100.0" fill="#bbe2c6"/>
<polygon points="185.0,133.0 193.0,138.0 197.0,146.0 190.0,148.0" fill="#bbe2c6"/>
<polygon points="198.0,144.0 207.0,134.0 216.0,130.0 214.0,160.0 200.0,166.0 196.0,155.0" fill="#f3efe2"/>
<polygon points="256.0,274.0 270.0,266.0 280.0,270.0 284.0,282.0 262.0,286.0 256.0,300.0" fill="#f3efe2"/>
<polygon points="310.0,340.0 330.0,346.0 342.0,366.0 330.0,364.0 316.0,356.0" fill="#f3efe2"/>
<polygon points="412.0,340.0 432.0,334.0 432.0,360.0 420.0,356.0" fill="#bbe2c6"/>
<polygon points="300.0,66.0 322.0,62.0 338.0,70.0 330.0,84.0 310.0,88.0 296.0,80.0" fill="#f3efe2"/>
<polygon points="338.0,70.0 362.0,72.0 372.0,84.0 352.0,90.0 336.0,86.0" fill="#e8eaed"/>
<polygon points="384.0,96.0 410.0,100.0 432.0,106.0 432.0,124.0 408.0,120.0 388.0,110.0" fill="#e8eaed"/>
<polygon points="280.0,108.0 300.0,100.0 318.0,108.0 312.0,126.0 296.0,134.0 282.0,126.0" fill="#e8eaed"/>
<polygon points="346.0,128.0 368.0,124.0 378.0,140.0 358.0,148.0" fill="#d0ecd7"/>
<polygon points="400.0,120.0 424.0,124.0 432.0,140.0 412.0,146.0" fill="#d0ecd7"/>
<polygon points="300.0,150.0 318.0,146.0 330.0,166.0 316.0,176.0" fill="#a6d8b3"/>
<polygon points="389.0,455.0 400.0,450.0 420.0,456.0 432.0,460.0 432.0,476.0 410.0,474.0 392.0,470.0" fill="#bbe2c6"/>
<polygon points="424.0,484.0 432.0,480.0 432.0,520.0 426.0,512.0" fill="#bbe2c6"/>
<polygon points="420.0,592.0 432.0,588.0 432.0,636.0 424.0,622.0" fill="#bbe2c6"/>
<path d="M256 290 L275 292 L300 298 L318 308 L326 318" fill="none" stroke="#9cc0f9" stroke-width="2.2"/>
<path d="M300 4 L312 20 L322 32" fill="none" stroke="#9cc0f9" stroke-width="2.5"/>
<polygon points="135.0,446.0 150.0,438.0 168.0,446.0 182.0,460.0 196.0,478.0 208.0,496.0 216.0,510.0 236.0,546.0 254.0,557.0 268.0,572.0 288.0,592.0 308.0,625.0 326.0,668.0 195.0,668.0 186.0,645.0 181.0,627.0 176.0,613.0 178.0,595.0 171.0,577.0 161.0,564.0 140.0,552.0 128.0,543.0 125.0,523.0 127.0,501.0 125.0,482.0 131.0,469.0 139.0,457.0" fill="#bbe2c6"/>
<polygon points="140.0,500.0 170.0,495.0 190.0,520.0 200.0,545.0 190.0,560.0 165.0,555.0 140.0,530.0" fill="#a6d8b3"/>
<polygon points="205.0,600.0 240.0,590.0 270.0,610.0 290.0,640.0 300.0,668.0 215.0,668.0 205.0,640.0" fill="#a6d8b3"/>
<polygon points="128.0,470.0 146.0,474.0 158.0,500.0 150.0,522.0 130.0,524.0 124.0,500.0" fill="#e8eaed"/>
<ellipse cx="187" cy="388" rx="19" ry="11" fill="#bbe2c6" transform="rotate(20 187 388)"/>
<polygon points="146.0,282.0 170.0,282.0 171.0,294.0 158.0,298.0 142.0,294.0" fill="#bbe2c6"/>
<polygon points="122.0,300.0 134.0,296.0 130.0,304.0 124.0,308.0" fill="#bbe2c6"/>
<polygon points="130.0,350.0 138.0,352.0 140.0,380.0 134.0,380.0" fill="#bbe2c6"/>
<polygon points="210.0,440.0 228.0,444.0 236.0,455.0 226.0,464.0 212.0,458.0" fill="#f3efe2"/>
<polygon points="213.0,338.0 225.0,341.0 233.0,352.0 228.0,360.0 218.0,364.0 214.0,352.0" fill="#f3efe2"/>
<polygon points="205.0,368.0 214.0,370.0 212.0,384.0 204.0,386.0" fill="#f3efe2"/>
<polygon points="140.0,552.0 156.0,562.0 166.0,578.0 160.0,580.0 150.0,566.0 136.0,556.0" fill="#e8eaed"/>
<path d="M212 512 L226 532 L240 552 L256 566" fill="none" stroke="#9cc0f9" stroke-width="2.5"/>
<polygon points="316.0,506.0 326.0,508.0 332.0,518.0 322.0,520.0" fill="#bbe2c6"/>
<polygon points="332.0,528.0 346.0,526.0 358.0,540.0 352.0,552.0 340.0,548.0" fill="#bbe2c6"/>
<polygon points="362.0,548.0 380.0,546.0 392.0,560.0 386.0,570.0 368.0,566.0" fill="#bbe2c6"/>
<polygon points="340.0,552.0 350.0,554.0 356.0,566.0 346.0,563.0" fill="#f3efe2"/>
<polygon points="318.0,610.0 360.0,622.0 380.0,650.0 340.0,650.0" fill="#f3efe2"/>
<polygon points="173.0,222.0 180.0,218.0 188.0,221.0 189.0,232.0 183.0,236.0 175.0,233.0 171.0,228.0" fill="#bbe2c6"/>
<polygon points="220.0,257.0 225.0,255.0 229.0,259.0 229.0,266.0 225.0,271.0 221.0,268.0" fill="#e4efe6"/>
<polygon points="224.0,271.0 228.0,269.0 229.0,276.0 226.0,278.0" fill="#bbe2c6"/>
<polygon points="232.0,192.0 238.0,194.0 236.0,198.0" fill="#bbe2c6"/>
<path d="M10 60 L40 68 L64 90 L90 100" fill="none" stroke="#fff" stroke-width="1"/>
<path d="M0 120 L30 128 L60 150 L96 160" fill="none" stroke="#fff" stroke-width="1"/>
<path d="M300 120 L330 150 L360 170 L400 180 L432 176" fill="none" stroke="#fff" stroke-width="1"/>
<path d="M310 200 L340 220 L372 240" fill="none" stroke="#fff" stroke-width="1"/>
<path d="M380 110 L410 130 L432 128" fill="none" stroke="#fff" stroke-width="1"/>
<path d="M150 300 L205 300" fill="none" stroke="#fff" stroke-width="1"/>
<path d="M148 312 L208 312" fill="none" stroke="#fff" stroke-width="1"/>
<path d="M148 324 L212 324" fill="none" stroke="#fff" stroke-width="1"/>
<path d="M160 284 L160 334" fill="none" stroke="#fff" stroke-width="1"/>
<path d="M174 284 L176 334" fill="none" stroke="#fff" stroke-width="1"/>
<path d="M196 280 L200 334" fill="none" stroke="#fff" stroke-width="1"/>
<path d="M140 360 L200 356" fill="none" stroke="#fff" stroke-width="1"/>
<path d="M140 372 L205 372" fill="none" stroke="#fff" stroke-width="1"/>
<path d="M300 300 L340 340 L380 390" fill="none" stroke="#fff" stroke-width="1"/>
<path d="M290 270 L330 262" fill="none" stroke="#fff" stroke-width="1"/>
<path d="M284 210 L320 222" fill="none" stroke="#fff" stroke-width="1"/>
<path d="M270 190 L300 196" fill="none" stroke="#fff" stroke-width="1"/>
<path d="M250 500 L300 540 L350 580 L400 610" fill="none" stroke="#fff" stroke-width="1"/>
<path d="M280 520 L300 505" fill="none" stroke="#fff" stroke-width="1"/>
<path d="M320 560 L345 545" fill="none" stroke="#fff" stroke-width="1"/>
<path d="M340 590 L380 570 L410 575" fill="none" stroke="#fff" stroke-width="1"/>
<path d="M370 610 L400 640 L432 650" fill="none" stroke="#fff" stroke-width="1"/>
<path d="M390 380 L432 372" fill="none" stroke="#fff" stroke-width="1"/>
<path d="M400 410 L432 405" fill="none" stroke="#fff" stroke-width="1"/>
<path d="M262 140 L285 150 L300 170" fill="none" stroke="#fff" stroke-width="1"/>
<path d="M240 110 L262 120" fill="none" stroke="#fff" stroke-width="1"/>
<path d="M263 182 L268 208 L274 236 L279 252 L284 258" fill="none" stroke="#f3b648" stroke-width="2.200" stroke-linejoin="round" stroke-linecap="round"/>
<path d="M279 258 L284 274 L292 286" fill="none" stroke="#f3b648" stroke-width="2.200" stroke-linejoin="round" stroke-linecap="round"/>
<path d="M292 288 L320 324 L350 360 L380 396 L410 432 L432 458" fill="none" stroke="#f3b648" stroke-width="2.200" stroke-linejoin="round" stroke-linecap="round"/>
<path d="M240 112 L232 130 L226 150 L236 166" fill="none" stroke="#f3b648" stroke-width="2.200" stroke-linejoin="round" stroke-linecap="round"/>
<path d="M118 8 L130 2 L140 0" fill="none" stroke="#f3b648" stroke-width="2.200" stroke-linejoin="round" stroke-linecap="round"/>
<path d="M312 0 L318 14 L328 20" fill="none" stroke="#f3b648" stroke-width="2.200" stroke-linejoin="round" stroke-linecap="round"/>
<path d="M418 80 L425 130 L432 160" fill="none" stroke="#f3b648" stroke-width="2.200" stroke-linejoin="round" stroke-linecap="round"/>
<path d="M400 390 L416 386 L432 386" fill="none" stroke="#f3b648" stroke-width="2.200" stroke-linejoin="round" stroke-linecap="round"/>
<path d="M400 390 L396 410 L404 432" fill="none" stroke="#f3b648" stroke-width="2.200" stroke-linejoin="round" stroke-linecap="round"/>
<path d="M208 334 L206 312 L202 296" fill="none" stroke="#f3b648" stroke-width="2.200" stroke-linejoin="round" stroke-linecap="round"/>
<path d="M300 545 L310 590 L318 625" fill="none" stroke="#f3b648" stroke-width="2.200" stroke-linejoin="round" stroke-linecap="round"/>
<path d="M262 120 L280 128 L300 150 L316 176 L330 196" fill="none" stroke="#f3b648" stroke-width="2.200" stroke-linejoin="round" stroke-linecap="round"/>
<path d="M196 334 L202 344 L208 350" fill="none" stroke="#f3b648" stroke-width="2.200" stroke-linejoin="round" stroke-linecap="round"/>
<path d="M270 104 L284 112 L296 104" fill="none" stroke="#f3b648" stroke-width="2.200" stroke-linejoin="round" stroke-linecap="round"/>
<path d="M258 160 L246 158 L236 166" fill="none" stroke="#f3b648" stroke-width="2.200" stroke-linejoin="round" stroke-linecap="round"/>
<path d="M300 246 L296 262 L300 270" fill="none" stroke="#f3b648" stroke-width="2.200" stroke-linejoin="round" stroke-linecap="round"/>
<path d="M344 304 L352 296 L362 308" fill="none" stroke="#f3b648" stroke-width="2.200" stroke-linejoin="round" stroke-linecap="round"/>
<path d="M222 472 L236 470 L246 488" fill="none" stroke="#f3b648" stroke-width="2.200" stroke-linejoin="round" stroke-linecap="round"/>
<path d="M246 488 L258 480 L270 489" fill="none" stroke="#f3b648" stroke-width="2.200" stroke-linejoin="round" stroke-linecap="round"/>
<path d="M356 376 L372 368 L378 358" fill="none" stroke="#f3b648" stroke-width="2.200" stroke-linejoin="round" stroke-linecap="round"/>
<path d="M184 450 L196 452 L208 468" fill="none" stroke="#f3b648" stroke-width="2.200" stroke-linejoin="round" stroke-linecap="round"/>
<path d="M160 408 L168 410" fill="none" stroke="#f3b648" stroke-width="2.200" stroke-linejoin="round" stroke-linecap="round"/>
<path d="M272 508 L280 500 L294.800 501" fill="none" stroke="#f3b648" stroke-width="2.200" stroke-linejoin="round" stroke-linecap="round"/>
<path d="M328 550 L340 540 L352 546" fill="none" stroke="#f3b648" stroke-width="2.200" stroke-linejoin="round" stroke-linecap="round"/>
<path d="M105 65 L118 70 L130 66" fill="none" stroke="#f3b648" stroke-width="2.200" stroke-linejoin="round" stroke-linecap="round"/>
<path d="M108 110 L122 112 L134 106" fill="none" stroke="#f3b648" stroke-width="2.200" stroke-linejoin="round" stroke-linecap="round"/>
<path d="M122 196 L136 198 L148 204" fill="none" stroke="#f3b648" stroke-width="2.200" stroke-linejoin="round" stroke-linecap="round"/>
<path d="M263 182 L268 208 L274 236 L279 252 L284 258" fill="none" stroke="#fde59a" stroke-width="0.900" stroke-linejoin="round" stroke-linecap="round"/>
<path d="M279 258 L284 274 L292 286" fill="none" stroke="#fde59a" stroke-width="0.900" stroke-linejoin="round" stroke-linecap="round"/>
<path d="M292 288 L320 324 L350 360 L380 396 L410 432 L432 458" fill="none" stroke="#fde59a" stroke-width="0.900" stroke-linejoin="round" stroke-linecap="round"/>
<path d="M240 112 L232 130 L226 150 L236 166" fill="none" stroke="#fde59a" stroke-width="0.900" stroke-linejoin="round" stroke-linecap="round"/>
<path d="M118 8 L130 2 L140 0" fill="none" stroke="#fde59a" stroke-width="0.900" stroke-linejoin="round" stroke-linecap="round"/>
<path d="M312 0 L318 14 L328 20" fill="none" stroke="#fde59a" stroke-width="0.900" stroke-linejoin="round" stroke-linecap="round"/>
<path d="M418 80 L425 130 L432 160" fill="none" stroke="#fde59a" stroke-width="0.900" stroke-linejoin="round" stroke-linecap="round"/>
<path d="M400 390 L416 386 L432 386" fill="none" stroke="#fde59a" stroke-width="0.900" stroke-linejoin="round" stroke-linecap="round"/>
<path d="M400 390 L396 410 L404 432" fill="none" stroke="#fde59a" stroke-width="0.900" stroke-linejoin="round" stroke-linecap="round"/>
<path d="M208 334 L206 312 L202 296" fill="none" stroke="#fde59a" stroke-width="0.900" stroke-linejoin="round" stroke-linecap="round"/>
<path d="M300 545 L310 590 L318 625" fill="none" stroke="#fde59a" stroke-width="0.900" stroke-linejoin="round" stroke-linecap="round"/>
<path d="M262 120 L280 128 L300 150 L316 176 L330 196" fill="none" stroke="#fde59a" stroke-width="0.900" stroke-linejoin="round" stroke-linecap="round"/>
<path d="M196 334 L202 344 L208 350" fill="none" stroke="#fde59a" stroke-width="0.900" stroke-linejoin="round" stroke-linecap="round"/>
<path d="M270 104 L284 112 L296 104" fill="none" stroke="#fde59a" stroke-width="0.900" stroke-linejoin="round" stroke-linecap="round"/>
<path d="M258 160 L246 158 L236 166" fill="none" stroke="#fde59a" stroke-width="0.900" stroke-linejoin="round" stroke-linecap="round"/>
<path d="M300 246 L296 262 L300 270" fill="none" stroke="#fde59a" stroke-width="0.900" stroke-linejoin="round" stroke-linecap="round"/>
<path d="M344 304 L352 296 L362 308" fill="none" stroke="#fde59a" stroke-width="0.900" stroke-linejoin="round" stroke-linecap="round"/>
<path d="M222 472 L236 470 L246 488" fill="none" stroke="#fde59a" stroke-width="0.900" stroke-linejoin="round" stroke-linecap="round"/>
<path d="M246 488 L258 480 L270 489" fill="none" stroke="#fde59a" stroke-width="0.900" stroke-linejoin="round" stroke-linecap="round"/>
<path d="M356 376 L372 368 L378 358" fill="none" stroke="#fde59a" stroke-width="0.900" stroke-linejoin="round" stroke-linecap="round"/>
<path d="M184 450 L196 452 L208 468" fill="none" stroke="#fde59a" stroke-width="0.900" stroke-linejoin="round" stroke-linecap="round"/>
<path d="M160 408 L168 410" fill="none" stroke="#fde59a" stroke-width="0.900" stroke-linejoin="round" stroke-linecap="round"/>
<path d="M272 508 L280 500 L294.800 501" fill="none" stroke="#fde59a" stroke-width="0.900" stroke-linejoin="round" stroke-linecap="round"/>
<path d="M328 550 L340 540 L352 546" fill="none" stroke="#fde59a" stroke-width="0.900" stroke-linejoin="round" stroke-linecap="round"/>
<path d="M105 65 L118 70 L130 66" fill="none" stroke="#fde59a" stroke-width="0.900" stroke-linejoin="round" stroke-linecap="round"/>
<path d="M108 110 L122 112 L134 106" fill="none" stroke="#fde59a" stroke-width="0.900" stroke-linejoin="round" stroke-linecap="round"/>
<path d="M122 196 L136 198 L148 204" fill="none" stroke="#fde59a" stroke-width="0.900" stroke-linejoin="round" stroke-linecap="round"/>
<path d="M84 0 L96 18 L106 38 L108 52 L104 70 L100 88 L106 108 L116 128 L124 144 L124 160 L121 178 L122 196 L128 212 L137 228 L142 246 L146.4 258.3 L147.5 269.4 L150.9 279.4 L156 282 L167.5 280.5 L171 284 L186 284 L190 300 L193 320 L196 334" fill="none" stroke="#f0a73a" stroke-width="3.2" stroke-linejoin="round" stroke-linecap="round"/>
<path d="M100 22 L110 12 L118 8" fill="none" stroke="#f0a73a" stroke-width="3.2" stroke-linejoin="round" stroke-linecap="round"/>
<path d="M124 146 L140 152 L166 159 L190 162 L210 164 L232 168 L258 170" fill="none" stroke="#f0a73a" stroke-width="3.2" stroke-linejoin="round" stroke-linecap="round"/>
<path d="M331 0 L328 20 L332 38 L326 54 L312 74 L296 88 L276 102 L264 118 L258 140 L258 160 L262 180 L268 208 L274 236 L279 256 L262 260 L244 264 L230 276 L218 290 L210 302" fill="none" stroke="#f0a73a" stroke-width="3.2" stroke-linejoin="round" stroke-linecap="round"/>
<path d="M296 88 L326 84 L350 88 L372 98 L392 108 L432 108" fill="none" stroke="#f0a73a" stroke-width="3.2" stroke-linejoin="round" stroke-linecap="round"/>
<path d="M326 14 L348 22 L370 34 L390 50 L400 60" fill="none" stroke="#f0a73a" stroke-width="3.2" stroke-linejoin="round" stroke-linecap="round"/>
<path d="M422 0 L408 24 L400 44 L404 62 L418 80 L432 92" fill="none" stroke="#f0a73a" stroke-width="3.2" stroke-linejoin="round" stroke-linecap="round"/>
<path d="M279 256 L300 246 L326 238 L346 222 L366 204 L392 196 L432 192" fill="none" stroke="#f0a73a" stroke-width="3.2" stroke-linejoin="round" stroke-linecap="round"/>
<path d="M279 258 L300 268 L324 286 L344 304 L360 330 L378 358 L396 386 L416 414 L432 436" fill="none" stroke="#f0a73a" stroke-width="3.2" stroke-linejoin="round" stroke-linecap="round"/>
<path d="M277 260 L284 280 L296 300 L312 322 L334 348 L356 376 L380 404 L404 432 L424 458 L432 470" fill="none" stroke="#f0a73a" stroke-width="3.2" stroke-linejoin="round" stroke-linecap="round"/>
<path d="M326 238 L340 262 L352 286 L362 308" fill="none" stroke="#f0a73a" stroke-width="3.2" stroke-linejoin="round" stroke-linecap="round"/>
<path d="M270 512 L294.8 501 L319.5 475.8 L356 462 L393.8 448.8 L432 430.8" fill="none" stroke="#f0a73a" stroke-width="3.2" stroke-linejoin="round" stroke-linecap="round"/>
<path d="M210 302 L208 326 L205 348 L208 372 L212 398 L206 428 L207 452 L222 472 L246 488 L272 508 L298 528 L328 550 L358 570 L394 590 L432 610" fill="none" stroke="#f0a73a" stroke-width="3.2" stroke-linejoin="round" stroke-linecap="round"/>
<path d="M208 334 L198 344 L176 350 L162 364 L156 384 L160 408 L170 426 L184 450 L198 478 L214 506 L234 544 L254 558 L270 576 L284 596 L298 626 L314 668" fill="none" stroke="#f0a73a" stroke-width="3.2" stroke-linejoin="round" stroke-linecap="round"/>
<path d="M150 285 L148 310 L148 334 L150 346 L136 356 L133 380 L139 408 L138 438 L131 468 L121 490 L119 520 L126 540 L158 562 L169 580 L177 600 L182 624 L186 646 L192 668" fill="none" stroke="#f0a73a" stroke-width="3.2" stroke-linejoin="round" stroke-linecap="round"/>
<path d="M168 410 L192 448 L208 468 L238 494 L268 520 L298 544 L338 574 L378 600" fill="none" stroke="#f0a73a" stroke-width="3.2" stroke-linejoin="round" stroke-linecap="round"/>
<path d="M177 586 L198 576 L218 568 L232 552 L244 530 L258 516 L270 512" fill="none" stroke="#f0a73a" stroke-width="3.2" stroke-linejoin="round" stroke-linecap="round"/>
<path d="M224 568 L238 590 L254 614 L270 640 L290 668" fill="none" stroke="#f0a73a" stroke-width="3.2" stroke-linejoin="round" stroke-linecap="round"/>
<path d="M394 590 L398 564 L414 546 L432 531" fill="none" stroke="#f0a73a" stroke-width="3.2" stroke-linejoin="round" stroke-linecap="round"/>
<path d="M258 140 L244 150 L236 166" fill="none" stroke="#f0a73a" stroke-width="3.2" stroke-linejoin="round" stroke-linecap="round"/>
<path d="M362 308 L380 330 L400 345 L432 350" fill="none" stroke="#f0a73a" stroke-width="3.2" stroke-linejoin="round" stroke-linecap="round"/>
<path d="M84 0 L96 18 L106 38 L108 52 L104 70 L100 88 L106 108 L116 128 L124 144 L124 160 L121 178 L122 196 L128 212 L137 228 L142 246 L146.4 258.3 L147.5 269.4 L150.9 279.4 L156 282 L167.5 280.5 L171 284 L186 284 L190 300 L193 320 L196 334" fill="none" stroke="#fddc6c" stroke-width="1.6" stroke-linejoin="round" stroke-linecap="round"/>
<path d="M100 22 L110 12 L118 8" fill="none" stroke="#fddc6c" stroke-width="1.6" stroke-linejoin="round" stroke-linecap="round"/>
<path d="M124 146 L140 152 L166 159 L190 162 L210 164 L232 168 L258 170" fill="none" stroke="#fddc6c" stroke-width="1.6" stroke-linejoin="round" stroke-linecap="round"/>
<path d="M331 0 L328 20 L332 38 L326 54 L312 74 L296 88 L276 102 L264 118 L258 140 L258 160 L262 180 L268 208 L274 236 L279 256 L262 260 L244 264 L230 276 L218 290 L210 302" fill="none" stroke="#fddc6c" stroke-width="1.6" stroke-linejoin="round" stroke-linecap="round"/>
<path d="M296 88 L326 84 L350 88 L372 98 L392 108 L432 108" fill="none" stroke="#fddc6c" stroke-width="1.6" stroke-linejoin="round" stroke-linecap="round"/>
<path d="M326 14 L348 22 L370 34 L390 50 L400 60" fill="none" stroke="#fddc6c" stroke-width="1.6" stroke-linejoin="round" stroke-linecap="round"/>
<path d="M422 0 L408 24 L400 44 L404 62 L418 80 L432 92" fill="none" stroke="#fddc6c" stroke-width="1.6" stroke-linejoin="round" stroke-linecap="round"/>
<path d="M279 256 L300 246 L326 238 L346 222 L366 204 L392 196 L432 192" fill="none" stroke="#fddc6c" stroke-width="1.6" stroke-linejoin="round" stroke-linecap="round"/>
<path d="M279 258 L300 268 L324 286 L344 304 L360 330 L378 358 L396 386 L416 414 L432 436" fill="none" stroke="#fddc6c" stroke-width="1.6" stroke-linejoin="round" stroke-linecap="round"/>
<path d="M277 260 L284 280 L296 300 L312 322 L334 348 L356 376 L380 404 L404 432 L424 458 L432 470" fill="none" stroke="#fddc6c" stroke-width="1.6" stroke-linejoin="round" stroke-linecap="round"/>
<path d="M326 238 L340 262 L352 286 L362 308" fill="none" stroke="#fddc6c" stroke-width="1.6" stroke-linejoin="round" stroke-linecap="round"/>
<path d="M270 512 L294.8 501 L319.5 475.8 L356 462 L393.8 448.8 L432 430.8" fill="none" stroke="#fddc6c" stroke-width="1.6" stroke-linejoin="round" stroke-linecap="round"/>
<path d="M210 302 L208 326 L205 348 L208 372 L212 398 L206 428 L207 452 L222 472 L246 488 L272 508 L298 528 L328 550 L358 570 L394 590 L432 610" fill="none" stroke="#fddc6c" stroke-width="1.6" stroke-linejoin="round" stroke-linecap="round"/>
<path d="M208 334 L198 344 L176 350 L162 364 L156 384 L160 408 L170 426 L184 450 L198 478 L214 506 L234 544 L254 558 L270 576 L284 596 L298 626 L314 668" fill="none" stroke="#fddc6c" stroke-width="1.6" stroke-linejoin="round" stroke-linecap="round"/>
<path d="M150 285 L148 310 L148 334 L150 346 L136 356 L133 380 L139 408 L138 438 L131 468 L121 490 L119 520 L126 540 L158 562 L169 580 L177 600 L182 624 L186 646 L192 668" fill="none" stroke="#fddc6c" stroke-width="1.6" stroke-linejoin="round" stroke-linecap="round"/>
<path d="M168 410 L192 448 L208 468 L238 494 L268 520 L298 544 L338 574 L378 600" fill="none" stroke="#fddc6c" stroke-width="1.6" stroke-linejoin="round" stroke-linecap="round"/>
<path d="M177 586 L198 576 L218 568 L232 552 L244 530 L258 516 L270 512" fill="none" stroke="#fddc6c" stroke-width="1.6" stroke-linejoin="round" stroke-linecap="round"/>
<path d="M224 568 L238 590 L254 614 L270 640 L290 668" fill="none" stroke="#fddc6c" stroke-width="1.6" stroke-linejoin="round" stroke-linecap="round"/>
<path d="M394 590 L398 564 L414 546 L432 531" fill="none" stroke="#fddc6c" stroke-width="1.6" stroke-linejoin="round" stroke-linecap="round"/>
<path d="M258 140 L244 150 L236 166" fill="none" stroke="#fddc6c" stroke-width="1.6" stroke-linejoin="round" stroke-linecap="round"/>
<path d="M362 308 L380 330 L400 345 L432 350" fill="none" stroke="#fddc6c" stroke-width="1.6" stroke-linejoin="round" stroke-linecap="round"/>
<rect x="111.5" y="-2" width="17" height="14" rx="6.500" fill="#fff" stroke="#444" stroke-width="1"/>
<text x="120" y="8.2" font-size="8.5" fill="#333" text-anchor="middle">37</text>
<path d="M401.2 17.7 Q401.2 26.7 411.7 31.7 Q422.2 26.7 422.2 17.7z" fill="#3f7fd6"/>
<path d="M401.2 18.2L402.2 13.7 Q411.7 15.7 421.2 13.7L422.2 18.2z" fill="#e0564f"/>
<text x="411.7" y="27.299999999999997" font-size="8.5" font-weight="700" fill="#fff" text-anchor="middle">680</text>
<path d="M349.3 28.799999999999997 Q349.3 37.8 359.8 42.8 Q370.3 37.8 370.3 28.799999999999997z" fill="#3f7fd6"/>
<path d="M349.3 29.299999999999997L350.3 24.799999999999997 Q359.8 26.799999999999997 369.3 24.799999999999997L370.3 29.299999999999997z" fill="#e0564f"/>
<text x="359.8" y="38.4" font-size="8.5" font-weight="700" fill="#fff" text-anchor="middle">780</text>
<path d="M306.0 59 Q306.0 68 314 73 Q322.0 68 322.0 59z" fill="#3f7fd6"/>
<path d="M306.0 59.5L307.0 55 Q314 57 321.0 55L322.0 59.5z" fill="#e0564f"/>
<text x="314" y="68.6" font-size="8.5" font-weight="700" fill="#fff" text-anchor="middle">80</text>
<path d="M110.4 143.3h20l-1 5q2 6-3 9l-6 3-6-3q-5-3-3-9z" fill="#fff" stroke="#444" stroke-width="1"/>
<text x="120.4" y="154.3" font-size="8.500" fill="#333" text-anchor="middle">101</text>
<path d="M160.9 154.3 Q160.9 163.3 171.4 168.3 Q181.9 163.3 181.9 154.3z" fill="#3f7fd6"/>
<path d="M160.9 154.8L161.9 150.3 Q171.4 152.3 180.9 150.3L181.9 154.8z" fill="#e0564f"/>
<text x="171.4" y="163.9" font-size="8.5" font-weight="700" fill="#fff" text-anchor="middle">580</text>
<rect x="96.0" y="198" width="15" height="14" rx="6.500" fill="#fff" stroke="#444" stroke-width="1"/>
<text x="103.5" y="208.2" font-size="8.5" fill="#333" text-anchor="middle">1</text>
<rect x="132.9" y="193" width="21" height="14" rx="6.500" fill="#fff" stroke="#444" stroke-width="1"/>
<text x="143.4" y="203.2" font-size="8.5" fill="#333" text-anchor="middle">131</text>
<path d="M235.2 261.6 Q235.2 270.6 243.2 275.6 Q251.2 270.6 251.2 261.6z" fill="#3f7fd6"/>
<path d="M235.2 262.1L236.2 257.6 Q243.2 259.6 250.2 257.6L251.2 262.1z" fill="#e0564f"/>
<text x="243.2" y="271.20000000000005" font-size="8.5" font-weight="700" fill="#fff" text-anchor="middle">80</text>
<rect x="336.7" y="260.5" width="17" height="14" rx="6.500" fill="#fff" stroke="#444" stroke-width="1"/>
<text x="345.2" y="270.7" font-size="8.5" fill="#333" text-anchor="middle">13</text>
<path d="M340.0 292.6 Q340.0 301.6 350.5 306.6 Q361.0 301.6 361.0 292.6z" fill="#3f7fd6"/>
<path d="M340.0 293.1L341.0 288.6 Q350.5 290.6 360.0 288.6L361.0 293.1z" fill="#e0564f"/>
<text x="350.5" y="302.20000000000005" font-size="8.5" font-weight="700" fill="#fff" text-anchor="middle">580</text>
<rect x="141.5" y="331" width="15" height="14" rx="6.500" fill="#fff" stroke="#444" stroke-width="1"/>
<text x="149" y="341.2" font-size="8.5" fill="#333" text-anchor="middle">1</text>
<path d="M164.4 345.5 Q164.4 354.5 174.9 359.5 Q185.4 354.5 185.4 345.5z" fill="#3f7fd6"/>
<path d="M164.4 346.0L165.4 341.5 Q174.9 343.5 184.4 341.5L185.4 346.0z" fill="#e0564f"/>
<text x="174.9" y="355.1" font-size="8.5" font-weight="700" fill="#fff" text-anchor="middle">280</text>
<path d="M364.4 362.1 Q364.4 371.1 374.9 376.1 Q385.4 371.1 385.4 362.1z" fill="#3f7fd6"/>
<path d="M364.4 362.6L365.4 358.1 Q374.9 360.1 384.4 358.1L385.4 362.6z" fill="#e0564f"/>
<text x="374.9" y="371.70000000000005" font-size="8.5" font-weight="700" fill="#fff" text-anchor="middle">880</text>
<path d="M146.8 409.4 Q146.8 418.4 157.3 423.4 Q167.8 418.4 167.8 409.4z" fill="#3f7fd6"/>
<path d="M146.8 409.9L147.8 405.4 Q157.3 407.4 166.8 405.4L167.8 409.9z" fill="#e0564f"/>
<text x="157.3" y="419.0" font-size="8.5" font-weight="700" fill="#fff" text-anchor="middle">280</text>
<rect x="391.9" y="438.4" width="17" height="14" rx="6.500" fill="#fff" stroke="#444" stroke-width="1"/>
<text x="400.4" y="448.59999999999997" font-size="8.5" fill="#333" text-anchor="middle">92</text>
<rect x="196.5" y="454.6" width="17" height="14" rx="6.500" fill="#fff" stroke="#444" stroke-width="1"/>
<text x="205" y="464.8" font-size="8.5" fill="#333" text-anchor="middle">82</text>
<rect x="120.6" y="465.2" width="15" height="14" rx="6.500" fill="#fff" stroke="#444" stroke-width="1"/>
<text x="128.1" y="475.4" font-size="8.5" fill="#333" text-anchor="middle">1</text>
<rect x="251.10000000000002" y="510.6" width="17" height="14" rx="6.500" fill="#fff" stroke="#444" stroke-width="1"/>
<text x="259.6" y="520.8000000000001" font-size="8.5" fill="#333" text-anchor="middle">92</text>
<path d="M249.60000000000002 555.2 Q249.60000000000002 564.2 260.1 569.2 Q270.6 564.2 270.6 555.2z" fill="#3f7fd6"/>
<path d="M249.60000000000002 555.7L250.60000000000002 551.2 Q260.1 553.2 269.6 551.2L270.6 555.7z" fill="#e0564f"/>
<text x="260.1" y="564.8000000000001" font-size="8.5" font-weight="700" fill="#fff" text-anchor="middle">280</text>
<rect x="198.3" y="565.2" width="17" height="14" rx="6.500" fill="#fff" stroke="#444" stroke-width="1"/>
<text x="206.8" y="575.4000000000001" font-size="8.5" fill="#333" text-anchor="middle">92</text>
<rect x="227.5" y="579.6" width="17" height="14" rx="6.500" fill="#fff" stroke="#444" stroke-width="1"/>
<text x="236" y="589.8000000000001" font-size="8.5" fill="#333" text-anchor="middle">35</text>
<rect x="421.5" y="523" width="17" height="14" rx="6.500" fill="#fff" stroke="#444" stroke-width="1"/>
<text x="430" y="533.2" font-size="8.5" fill="#333" text-anchor="middle">84</text>
<text x="78" y="3.3" font-size="12" font-weight="400" fill="#2d2d2d" stroke="#fff" stroke-width="3" stroke-linejoin="round" paint-order="stroke" text-anchor="middle" textLength="37" lengthAdjust="spacing" >Novato</text>
<text x="307.5" y="7.8" font-size="12" font-weight="400" fill="#2d2d2d" stroke="#fff" stroke-width="3" stroke-linejoin="round" paint-order="stroke" text-anchor="middle" textLength="35" lengthAdjust="spacing" >Vallejo</text>
<text x="216.6" y="45" font-size="10.5" fill="#4f86d6" text-anchor="middle" textLength="70" lengthAdjust="spacing" transform="rotate(4 216 41)">San Pablo Bay</text>
<text x="379.3" y="59.3" font-size="12" font-weight="400" fill="#2d2d2d" stroke="#fff" stroke-width="3" stroke-linejoin="round" paint-order="stroke" text-anchor="middle" textLength="37.6" lengthAdjust="spacing" >Benicia</text>
<text x="105.7" y="77.1" font-size="12" font-weight="400" fill="#2d2d2d" stroke="#fff" stroke-width="3" stroke-linejoin="round" paint-order="stroke" text-anchor="middle" textLength="54" lengthAdjust="spacing" >St Vincent</text>
<text x="397.5" y="87.7" font-size="12" font-weight="400" fill="#2d2d2d" stroke="#fff" stroke-width="3" stroke-linejoin="round" paint-order="stroke" text-anchor="middle" textLength="45.7" lengthAdjust="spacing" >Martinez</text>
<text x="277.8" y="100.6" font-size="12" font-weight="400" fill="#2d2d2d" stroke="#fff" stroke-width="3" stroke-linejoin="round" paint-order="stroke" text-anchor="middle" textLength="32" lengthAdjust="spacing" >Pinole</text>
<text x="112.8" y="106.8" font-size="12" font-weight="400" fill="#2d2d2d" stroke="#fff" stroke-width="3" stroke-linejoin="round" paint-order="stroke" text-anchor="middle" textLength="72.7" lengthAdjust="spacing" >Santa Venetia</text>
<text x="108.4" y="129.4" font-size="12" font-weight="400" fill="#2d2d2d" stroke="#fff" stroke-width="3" stroke-linejoin="round" paint-order="stroke" text-anchor="middle" textLength="56.3" lengthAdjust="spacing" >San Rafael</text>
<text x="243.6" y="139.2" font-size="12" font-weight="400" fill="#2d2d2d" stroke="#fff" stroke-width="3" stroke-linejoin="round" paint-order="stroke" text-anchor="middle" textLength="52.9" lengthAdjust="spacing" >San Pablo</text>
<text x="241.9" y="164.5" font-size="12" font-weight="400" fill="#2d2d2d" stroke="#fff" stroke-width="3" stroke-linejoin="round" paint-order="stroke" text-anchor="middle" textLength="52.9" lengthAdjust="spacing" >Richmond</text>
<text x="418.5" y="153.3" font-size="12" fill="#2d2d2d" stroke="#fff" stroke-width="3" stroke-linejoin="round" paint-order="stroke" letter-spacing="0.2">Pleasant Hill</text>
<text x="111" y="172.8" font-size="12" font-weight="400" fill="#2d2d2d" stroke="#fff" stroke-width="3" stroke-linejoin="round" paint-order="stroke" text-anchor="middle" textLength="72" lengthAdjust="spacing" >Corte Madera</text>
<text x="269.4" y="182.2" font-size="12" font-weight="400" fill="#2d2d2d" stroke="#fff" stroke-width="3" stroke-linejoin="round" paint-order="stroke" text-anchor="middle" textLength="48.4" lengthAdjust="spacing" >El Cerrito</text>
<text x="413.6" y="187.5" font-size="12" fill="#2d2d2d" stroke="#fff" stroke-width="3" stroke-linejoin="round" paint-order="stroke" letter-spacing="0.2">Walnut Creek</text>
<text x="98.2" y="191.5" font-size="12" font-weight="400" fill="#2d2d2d" stroke="#fff" stroke-width="3" stroke-linejoin="round" paint-order="stroke" text-anchor="middle" textLength="54" lengthAdjust="spacing" >Mill Valley</text>
<text x="277.8" y="208.8" font-size="12" font-weight="400" fill="#2d2d2d" stroke="#fff" stroke-width="3" stroke-linejoin="round" paint-order="stroke" text-anchor="middle" textLength="35.3" lengthAdjust="spacing" >Albany</text>
<text x="384.3" y="210.1" font-size="12" fill="#2d2d2d" stroke="#fff" stroke-width="3" stroke-linejoin="round" paint-order="stroke" letter-spacing="0.25">Lafayette</text>
<text x="296.4" y="223.0" font-size="12" font-weight="400" fill="#2d2d2d" stroke="#fff" stroke-width="3" stroke-linejoin="round" paint-order="stroke" text-anchor="middle" textLength="43.9" lengthAdjust="spacing" >Berkeley</text>
<text x="364.3" y="218.6" font-size="12" font-weight="400" fill="#2d2d2d" stroke="#fff" stroke-width="3" stroke-linejoin="round" paint-order="stroke" text-anchor="middle" textLength="34.2" lengthAdjust="spacing" >Orinda</text>
<text x="109.3" y="230.1" font-size="13" font-weight="400" fill="#2a8c4a" stroke="#fff" stroke-width="3" stroke-linejoin="round" paint-order="stroke" text-anchor="middle" textLength="75.4" lengthAdjust="spacing" >Golden Gate</text>
<text x="106.6" y="244.2" font-size="13" font-weight="400" fill="#2a8c4a" stroke="#fff" stroke-width="3" stroke-linejoin="round" paint-order="stroke" text-anchor="middle" textLength="51.8" lengthAdjust="spacing" >National</text>
<text x="108.8" y="258.0" font-size="13" font-weight="400" fill="#2a8c4a" stroke="#fff" stroke-width="3" stroke-linejoin="round" paint-order="stroke" text-anchor="middle" textLength="65.7" lengthAdjust="spacing" >Recreation</text>
<text x="108.8" y="271.3" font-size="13" font-weight="400" fill="#2a8c4a" stroke="#fff" stroke-width="3" stroke-linejoin="round" paint-order="stroke" text-anchor="middle" textLength="28.1" lengthAdjust="spacing" >Area</text>
<text x="285.3" y="253.2" font-size="12" font-weight="400" fill="#2d2d2d" stroke="#fff" stroke-width="3" stroke-linejoin="round" paint-order="stroke" text-anchor="middle" textLength="53.8" lengthAdjust="spacing" >Emeryville</text>
<text x="399.7" y="257.6" font-size="12" font-weight="400" fill="#2d2d2d" stroke="#fff" stroke-width="3" stroke-linejoin="round" paint-order="stroke" text-anchor="middle" textLength="40.5" lengthAdjust="spacing" >Moraga</text>
<text x="298.2" y="285.8" font-size="14" font-weight="400" fill="#222" stroke="#fff" stroke-width="3" stroke-linejoin="round" paint-order="stroke" text-anchor="middle" textLength="54" lengthAdjust="spacing" >Oakland</text>
<text x="298.2" y="285.8" font-size="14" font-weight="400" fill="#222" stroke="#222" stroke-width="0.5" text-anchor="middle" textLength="54" lengthAdjust="spacing" >Oakland</text>
<text x="190" y="314.5" font-size="18.5" font-weight="400" fill="#1a1a1a" stroke="#fff" stroke-width="3.5" stroke-linejoin="round" paint-order="stroke" text-anchor="middle" textLength="126" lengthAdjust="spacing" >San Francisco</text>
<text x="190" y="314.5" font-size="18.5" font-weight="400" fill="#1a1a1a" stroke="#1a1a1a" stroke-width="0.55" text-anchor="middle" textLength="126" lengthAdjust="spacing" >San Francisco</text>
<text x="289.8" y="307.3" font-size="12" font-weight="400" fill="#2d2d2d" stroke="#fff" stroke-width="3" stroke-linejoin="round" paint-order="stroke" text-anchor="middle" textLength="46.1" lengthAdjust="spacing" >Alameda</text>
<text x="380.4" y="357.6" font-size="12" font-weight="400" fill="#2d2d2d" stroke="#fff" stroke-width="3" stroke-linejoin="round" paint-order="stroke" text-anchor="middle" textLength="65.7" lengthAdjust="spacing" >San Leandro</text>
<text x="406.8" y="384.9" font-size="12" fill="#2d2d2d" stroke="#fff" stroke-width="3" stroke-linejoin="round" paint-order="stroke" letter-spacing="0.2">Castro Valley</text>
<text x="152.7" y="392.3" font-size="12" font-weight="400" fill="#2d2d2d" stroke="#fff" stroke-width="3" stroke-linejoin="round" paint-order="stroke" text-anchor="middle" textLength="45.7" lengthAdjust="spacing" >Daly City</text>
<text x="413.6" y="410.3" font-size="12" fill="#2d2d2d" stroke="#fff" stroke-width="3" stroke-linejoin="round" paint-order="stroke" letter-spacing="0.2">Hayward</text>
<text x="198" y="417.3" font-size="12" font-weight="400" fill="#2d2d2d" stroke="#fff" stroke-width="3" stroke-linejoin="round" paint-order="stroke" text-anchor="middle" textLength="53.6" lengthAdjust="spacing" >South San</text>
<text x="198" y="429.3" font-size="12" font-weight="400" fill="#2d2d2d" stroke="#fff" stroke-width="3" stroke-linejoin="round" paint-order="stroke" text-anchor="middle" textLength="52.2" lengthAdjust="spacing" >Francisco</text>
<text x="138.3" y="443.2" font-size="12" font-weight="400" fill="#2d2d2d" stroke="#fff" stroke-width="3" stroke-linejoin="round" paint-order="stroke" text-anchor="middle" textLength="42.8" lengthAdjust="spacing" >Pacifica</text>
<text x="195.7" y="445.5" font-size="12" font-weight="400" fill="#2d2d2d" stroke="#fff" stroke-width="3" stroke-linejoin="round" paint-order="stroke" text-anchor="middle" textLength="54" lengthAdjust="spacing" >San Bruno</text>
<text x="258.2" y="507.6" font-size="12" font-weight="400" fill="#2d2d2d" stroke="#fff" stroke-width="3" stroke-linejoin="round" paint-order="stroke" text-anchor="middle" textLength="56.9" lengthAdjust="spacing" >San Mateo</text>
<text x="334.1" y="537.2" font-size="12" font-weight="400" fill="#2d2d2d" stroke="#fff" stroke-width="3" stroke-linejoin="round" paint-order="stroke" text-anchor="middle" textLength="55.6" lengthAdjust="spacing" font-style="italic">Bair Island</text>
<text x="305.4" y="558.0" font-size="12" font-weight="400" fill="#2d2d2d" stroke="#fff" stroke-width="3" stroke-linejoin="round" paint-order="stroke" text-anchor="middle" textLength="56.5" lengthAdjust="spacing" >San Carlos</text>
<text x="153.6" y="562.2" font-size="12" font-weight="400" fill="#2d2d2d" stroke="#fff" stroke-width="3" stroke-linejoin="round" paint-order="stroke" text-anchor="middle" textLength="56.9" lengthAdjust="spacing" >El Granada</text>
<text x="329" y="578.9" font-size="12" font-weight="400" fill="#2d2d2d" stroke="#fff" stroke-width="3" stroke-linejoin="round" paint-order="stroke" text-anchor="middle" textLength="72.9" lengthAdjust="spacing" >Redwood City</text>
<text x="366.6" y="593.7" font-size="12" font-weight="400" fill="#2d2d2d" stroke="#fff" stroke-width="3" stroke-linejoin="round" paint-order="stroke" text-anchor="middle" textLength="22.5" lengthAdjust="spacing" >East</text>
<text x="427" y="594.3" font-size="12" font-weight="400" fill="#2d2d2d" stroke="#fff" stroke-width="3" stroke-linejoin="round" paint-order="stroke" text-anchor="middle" textLength="6" lengthAdjust="spacing" >o</text>
<text x="182.8" y="592.3" font-size="12" font-weight="400" fill="#2d2d2d" stroke="#fff" stroke-width="3" stroke-linejoin="round" paint-order="stroke" text-anchor="middle" textLength="21.4" lengthAdjust="spacing" >Half</text>
<text x="183.7" y="603.9" font-size="12" font-weight="400" fill="#2d2d2d" stroke="#fff" stroke-width="3" stroke-linejoin="round" paint-order="stroke" text-anchor="middle" textLength="52.4" lengthAdjust="spacing" >Moon Bay</text>
<text x="367.5" y="617.7" font-size="12" fill="#2d2d2d" stroke="#fff" stroke-width="3" stroke-linejoin="round" paint-order="stroke" letter-spacing="0.2">Palo Alto</text>
<text x="310" y="628.3" font-size="12" font-weight="400" fill="#2d2d2d" stroke="#fff" stroke-width="3" stroke-linejoin="round" paint-order="stroke" text-anchor="middle" textLength="52.2" lengthAdjust="spacing" >Woodside</text>
<text x="352.2" y="633.9" font-size="12" fill="#2d2d2d" stroke="#fff" stroke-width="3" stroke-linejoin="round" paint-order="stroke" letter-spacing="0.2">Stanford</text>
<text x="322" y="668.0" font-size="11" font-weight="400" fill="#8a8a8a" stroke="#fff" stroke-width="3" stroke-linejoin="round" paint-order="stroke" text-anchor="middle" textLength="62" lengthAdjust="spacing" >Portola Valley</text>
<circle cx="169.9" cy="332.7" r="11" fill="#2f3d45"/><circle cx="169.9" cy="332.7" r="6.700" fill="none" stroke="#fff" stroke-width="1.300"/>
</svg>
<div class="b" style="left:382px;top:491px;width:40px;height:40px;background:#fff;border-radius:2px;box-shadow:0 1px 4px rgba(0,0,0,.3);"></div>
<svg class="b" style="left:392px;top:494px" width="20" height="34" viewBox="0 0 20 34"><circle cx="10" cy="6" r="4.600" fill="#f5b21a"/><path d="M3.200 13.500Q3.200 11.200 5.600 11.200h8.800Q16.800 11.200 16.800 13.500l-1.500 8.800h-1.500l-.9 9.700h-2.300l-.6-7.500-.6 7.500H7.100l-.9-9.700H4.700z" fill="#f5b21a"/><path d="M7.400 11.400l2.600 4.200 2.600-4.200z" fill="#e0861a"/></svg>
<div class="b" style="left:382px;top:563px;width:40px;height:81px;background:#fff;border-radius:2px;box-shadow:0 1px 4px rgba(0,0,0,.3);"></div>
<div class="b" style="left:387px;top:603px;width:30px;height:1px;background:#e6e6e6;"></div>
<div class="b" style="left:393px;top:581px;width:18px;height:3px;background:#666;"></div><div class="b" style="left:400.500px;top:573.500px;width:3px;height:18px;background:#666;"></div>
<div class="b" style="left:393px;top:622.500px;width:18px;height:3px;background:#666;"></div>
<svg class="b" style="left:6px;top:638px" width="66" height="30" viewBox="0 0 66 30"><g font-size="18.5" font-family="Liberation Sans" letter-spacing="-0.7"><text x="3.500" y="21" fill="none" stroke="#fff" stroke-width="2.6" stroke-linejoin="round" opacity=".9">Google</text><text x="3.500" y="21" stroke-width="0.5"><tspan fill="#4285f4" stroke="#4285f4">G</tspan><tspan fill="#ea4335" stroke="#ea4335">o</tspan><tspan fill="#fbbc05" stroke="#fbbc05">o</tspan><tspan fill="#4285f4" stroke="#4285f4">g</tspan><tspan fill="#34a853" stroke="#34a853">l</tspan><tspan fill="#ea4335" stroke="#ea4335">e</tspan></text></g></svg>
<div class="b" style="left:47px;top:654px;width:98px;height:14px;background:rgba(245,245,245,.7);"></div>
<div class="b" style="left:146px;top:654px;width:120px;height:14px;background:rgba(245,245,245,.7);"></div>
<div class="b" style="left:267px;top:654px;width:70px;height:14px;background:rgba(245,245,245,.7);"></div>
<div class="b" style="left:338px;top:654px;width:94px;height:14px;background:rgba(245,245,245,.7);"></div>
<div class="b" style="left:52.5px;top:654px;height:14px;line-height:14px;font-size:10px;color:#222;white-space:pre;width:87px;">Keyboard shortcuts</div>
<div class="b" style="left:150.6px;top:654px;height:14px;line-height:14px;font-size:10px;color:#222;white-space:pre;width:109px;">Map data ©2023 Google</div>
<div class="b" style="left:271.6px;top:654px;height:14px;line-height:14px;font-size:10px;color:#222;white-space:pre;width:59px;">Terms of Use</div>
<div class="b" style="left:342.5px;top:654px;height:14px;line-height:14px;font-size:10px;color:#222;white-space:pre;width:83px;">Report a map error</div>
</div>
</body></html>
